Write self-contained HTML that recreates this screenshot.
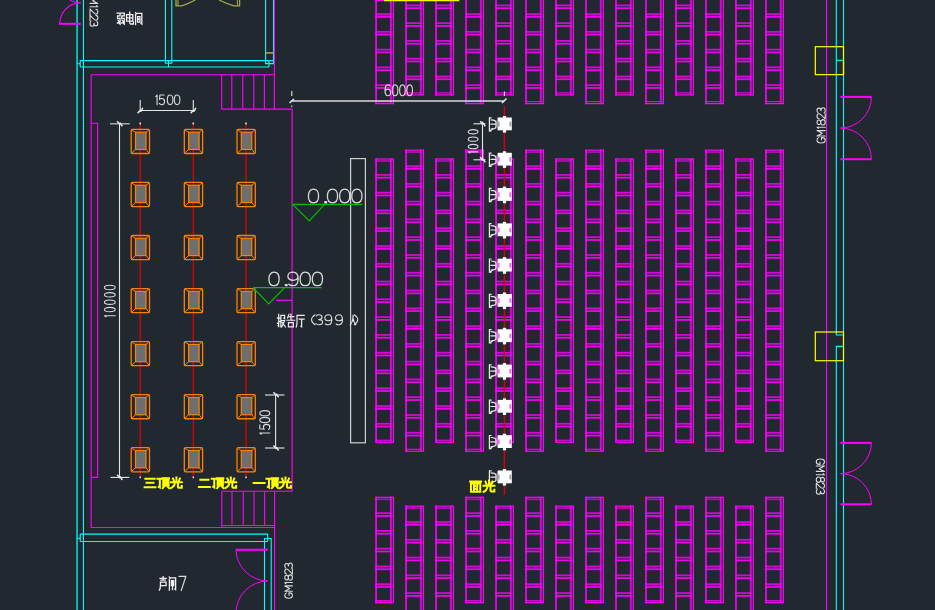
<!DOCTYPE html>
<html><head><meta charset="utf-8"><style>
html,body{margin:0;padding:0;background:#212830;width:935px;height:610px;overflow:hidden}
svg{display:block}
</style></head><body>
<svg width="935" height="610" viewBox="0 0 935 610">
<rect x="0" y="0" width="935" height="610" fill="#212830"/>
<line x1="77.05" y1="0.00" x2="77.05" y2="610.00" stroke="#00ffff" stroke-width="1.3" />
<line x1="83.45" y1="0.00" x2="83.45" y2="610.00" stroke="#00ffff" stroke-width="1.1" />
<path d="M80.2,60.6 H273.5 M80.2,67 H269 M80.2,60.6 V67 M77,63.8 H80.2" stroke="#00ffff" stroke-width="1.1" fill="none" />
<path d="M165.45,0 V63.3 H171.8 V0 M168.5,60.6 V67" stroke="#00ffff" stroke-width="1.1" fill="none" />
<path d="M265.6,0 V63.6 H273.5 V0 M269,60.5 V67.1" stroke="#00ffff" stroke-width="1.1" fill="none" />
<line x1="265.60" y1="52.90" x2="273.50" y2="52.90" stroke="#a3a84c" stroke-width="1.6" />
<path d="M176,0 L176,5.8 L181.8,5.8 Q189,3.5 195.3,0" stroke="#a3a84c" stroke-width="1.3" fill="none" />
<path d="M239.6,0 L239.6,5.8 L233.8,5.8 Q226,3.5 219,0" stroke="#a3a84c" stroke-width="1.3" fill="none" />
<line x1="237.40" y1="0.00" x2="237.40" y2="5.80" stroke="#a3a84c" stroke-width="1.0" />
<line x1="178.00" y1="0.00" x2="178.00" y2="5.80" stroke="#a3a84c" stroke-width="1.0" />
<line x1="59.00" y1="23.80" x2="80.70" y2="23.80" stroke="#ff00ff" stroke-width="2.0" />
<path d="M59.8,23.8 A21,21 0 0 1 80.7,2.8" stroke="#ff00ff" stroke-width="1.1" fill="none" />
<path d="M80.7,2.8 A21,21 0 0 1 69.9,0" stroke="#ff00ff" stroke-width="1.1" fill="none" />
<path d="M274.4,0 V109.1 H292.1 V491.2 H221.8" stroke="#ff00ff" stroke-width="1.1" fill="none" />
<path d="M91.1,74.8 H274.4" stroke="#ff00ff" stroke-width="1.1" fill="none" />
<path d="M91.1,74.8 V527.5 H274.6" stroke="#ff00ff" stroke-width="1.1" fill="none" />
<path d="M221.8,525.5 H274.6" stroke="#ff00ff" stroke-width="1.1" fill="none" />
<line x1="274.60" y1="491.20" x2="274.60" y2="610.00" stroke="#ff00ff" stroke-width="1.1" />
<path d="M221.7,74.8 V109.1 H274.4" stroke="#ff00ff" stroke-width="1.1" fill="none" />
<line x1="231.80" y1="74.80" x2="231.80" y2="109.10" stroke="#ff00ff" stroke-width="1.1" />
<line x1="242.80" y1="74.80" x2="242.80" y2="109.10" stroke="#ff00ff" stroke-width="1.1" />
<line x1="253.80" y1="74.80" x2="253.80" y2="109.10" stroke="#ff00ff" stroke-width="1.1" />
<line x1="264.40" y1="74.80" x2="264.40" y2="109.10" stroke="#ff00ff" stroke-width="1.1" />
<line x1="221.80" y1="491.20" x2="221.80" y2="527.50" stroke="#ff00ff" stroke-width="1.1" />
<line x1="232.00" y1="491.20" x2="232.00" y2="525.50" stroke="#ff00ff" stroke-width="1.1" />
<line x1="243.20" y1="491.20" x2="243.20" y2="525.50" stroke="#ff00ff" stroke-width="1.1" />
<line x1="254.00" y1="491.20" x2="254.00" y2="525.50" stroke="#ff00ff" stroke-width="1.1" />
<line x1="264.60" y1="491.20" x2="264.60" y2="525.50" stroke="#ff00ff" stroke-width="1.1" />
<path d="M91.1,123.2 H97.6 V477.4 H91.1" stroke="#ff00ff" stroke-width="1.1" fill="none" />
<line x1="276.00" y1="300.30" x2="292.00" y2="300.30" stroke="#ff00ff" stroke-width="1.2" />
<path d="M80.2,534.1 H267.7 V541.5 M80.2,541.5 H267.7 M80.2,534.1 V541.5 M77,538.3 H80.2" stroke="#00ffff" stroke-width="1.1" fill="none" />
<path d="M264.5,610 V538.5 H271.2 V610" stroke="#00ffff" stroke-width="1.1" fill="none" />
<line x1="235.80" y1="549.80" x2="268.00" y2="549.80" stroke="#ff00ff" stroke-width="2.0" />
<path d="M236,550 A32,32 0 0 0 268,581" stroke="#ff00ff" stroke-width="1.0" fill="none" />
<path d="M268,581 A32,32 0 0 0 236,613" stroke="#ff00ff" stroke-width="1.0" fill="none" />
<line x1="826.50" y1="0.00" x2="826.50" y2="610.00" stroke="#ff00ff" stroke-width="1.1" />
<path d="M836.3,0 L836.3,335 L843.5,335" stroke="#00ffff" stroke-width="1.1" fill="none" />
<path d="M843.5,346.4 L836.3,346.4 L836.3,610" stroke="#00ffff" stroke-width="1.1" fill="none" />
<line x1="843.50" y1="0.00" x2="843.50" y2="610.00" stroke="#00ffff" stroke-width="1.1" />
<line x1="836.30" y1="60.30" x2="843.50" y2="60.30" stroke="#00ffff" stroke-width="1.1" />
<rect x="815.30" y="46.70" width="28.20" height="27.90" stroke="#ffff00" stroke-width="1.2" fill="none" />
<rect x="815.30" y="332.00" width="28.20" height="28.70" stroke="#ffff00" stroke-width="1.2" fill="none" />
<line x1="843.50" y1="60.30" x2="843.50" y2="74.60" stroke="#ffff00" stroke-width="1.2" />
<line x1="840.40" y1="96.90" x2="871.40" y2="96.90" stroke="#ff00ff" stroke-width="2.0" />
<line x1="840.40" y1="159.20" x2="871.40" y2="159.20" stroke="#ff00ff" stroke-width="2.0" />
<path d="M871.4,96.9 A31,31 0 0 1 840.4,128.05" stroke="#ff00ff" stroke-width="1.0" fill="none" />
<path d="M840.4,128.05 A31,31 0 0 1 871.4,159.2" stroke="#ff00ff" stroke-width="1.0" fill="none" />
<line x1="840.40" y1="442.90" x2="871.40" y2="442.90" stroke="#ff00ff" stroke-width="2.0" />
<line x1="840.40" y1="504.30" x2="871.40" y2="504.30" stroke="#ff00ff" stroke-width="2.0" />
<path d="M871.4,442.9 A31,31 0 0 1 840.4,473.6" stroke="#ff00ff" stroke-width="1.0" fill="none" />
<path d="M840.4,473.6 A31,31 0 0 1 871.4,504.3" stroke="#ff00ff" stroke-width="1.0" fill="none" />
<line x1="140.20" y1="123.00" x2="140.20" y2="477.00" stroke="#dd0000" stroke-width="1.3" />
<line x1="140.20" y1="122.50" x2="140.20" y2="124.50" stroke="#e8e8e8" stroke-width="1.5" />
<line x1="140.20" y1="476.50" x2="140.20" y2="478.20" stroke="#e8e8e8" stroke-width="1.4" />
<line x1="193.30" y1="123.00" x2="193.30" y2="477.00" stroke="#dd0000" stroke-width="1.3" />
<line x1="193.30" y1="122.50" x2="193.30" y2="124.50" stroke="#e8e8e8" stroke-width="1.5" />
<line x1="193.30" y1="476.50" x2="193.30" y2="478.20" stroke="#e8e8e8" stroke-width="1.4" />
<line x1="246.00" y1="123.00" x2="246.00" y2="477.00" stroke="#dd0000" stroke-width="1.3" />
<line x1="246.00" y1="122.50" x2="246.00" y2="124.50" stroke="#e8e8e8" stroke-width="1.5" />
<line x1="246.00" y1="476.50" x2="246.00" y2="478.20" stroke="#e8e8e8" stroke-width="1.4" />
<rect x="131.20" y="129.40" width="18.30" height="24.10" stroke="#ff8000" stroke-width="1.3" fill="none" rx="1.2"/>
<rect x="135.50" y="132.20" width="10.50" height="17.30" stroke="#ff8000" stroke-width="1.2" fill="#6e6e6e" />
<path d="M131.8,130.0 L135.5,132.2 M148.89999999999998,130.0 L146.0,132.2 M131.8,152.89999999999998 L135.5,149.5 M148.89999999999998,152.89999999999998 L146.0,149.5" stroke="#ff8000" stroke-width="1.0" fill="none" />
<rect x="184.30" y="129.40" width="18.30" height="24.10" stroke="#ff8000" stroke-width="1.3" fill="none" rx="1.2"/>
<rect x="188.60" y="132.20" width="10.50" height="17.30" stroke="#ff8000" stroke-width="1.2" fill="#6e6e6e" />
<path d="M184.90000000000003,130.0 L188.60000000000002,132.2 M202.0,130.0 L199.10000000000002,132.2 M184.90000000000003,152.89999999999998 L188.60000000000002,149.5 M202.0,152.89999999999998 L199.10000000000002,149.5" stroke="#ff8000" stroke-width="1.0" fill="none" />
<rect x="237.00" y="129.40" width="18.30" height="24.10" stroke="#ff8000" stroke-width="1.3" fill="none" rx="1.2"/>
<rect x="241.30" y="132.20" width="10.50" height="17.30" stroke="#ff8000" stroke-width="1.2" fill="#6e6e6e" />
<path d="M237.60000000000002,130.0 L241.3,132.2 M254.7,130.0 L251.8,132.2 M237.60000000000002,152.89999999999998 L241.3,149.5 M254.7,152.89999999999998 L251.8,149.5" stroke="#ff8000" stroke-width="1.0" fill="none" />
<rect x="131.20" y="182.45" width="18.30" height="24.10" stroke="#ff8000" stroke-width="1.3" fill="none" rx="1.2"/>
<rect x="135.50" y="185.25" width="10.50" height="17.30" stroke="#ff8000" stroke-width="1.2" fill="#6e6e6e" />
<path d="M131.8,183.05 L135.5,185.25 M148.89999999999998,183.05 L146.0,185.25 M131.8,205.95 L135.5,202.55 M148.89999999999998,205.95 L146.0,202.55" stroke="#ff8000" stroke-width="1.0" fill="none" />
<rect x="184.30" y="182.45" width="18.30" height="24.10" stroke="#ff8000" stroke-width="1.3" fill="none" rx="1.2"/>
<rect x="188.60" y="185.25" width="10.50" height="17.30" stroke="#ff8000" stroke-width="1.2" fill="#6e6e6e" />
<path d="M184.90000000000003,183.05 L188.60000000000002,185.25 M202.0,183.05 L199.10000000000002,185.25 M184.90000000000003,205.95 L188.60000000000002,202.55 M202.0,205.95 L199.10000000000002,202.55" stroke="#ff8000" stroke-width="1.0" fill="none" />
<rect x="237.00" y="182.45" width="18.30" height="24.10" stroke="#ff8000" stroke-width="1.3" fill="none" rx="1.2"/>
<rect x="241.30" y="185.25" width="10.50" height="17.30" stroke="#ff8000" stroke-width="1.2" fill="#6e6e6e" />
<path d="M237.60000000000002,183.05 L241.3,185.25 M254.7,183.05 L251.8,185.25 M237.60000000000002,205.95 L241.3,202.55 M254.7,205.95 L251.8,202.55" stroke="#ff8000" stroke-width="1.0" fill="none" />
<rect x="131.20" y="235.50" width="18.30" height="24.10" stroke="#ff8000" stroke-width="1.3" fill="none" rx="1.2"/>
<rect x="135.50" y="238.30" width="10.50" height="17.30" stroke="#ff8000" stroke-width="1.2" fill="#6e6e6e" />
<path d="M131.8,236.1 L135.5,238.29999999999998 M148.89999999999998,236.1 L146.0,238.29999999999998 M131.8,259.0 L135.5,255.6 M148.89999999999998,259.0 L146.0,255.6" stroke="#ff8000" stroke-width="1.0" fill="none" />
<rect x="184.30" y="235.50" width="18.30" height="24.10" stroke="#ff8000" stroke-width="1.3" fill="none" rx="1.2"/>
<rect x="188.60" y="238.30" width="10.50" height="17.30" stroke="#ff8000" stroke-width="1.2" fill="#6e6e6e" />
<path d="M184.90000000000003,236.1 L188.60000000000002,238.29999999999998 M202.0,236.1 L199.10000000000002,238.29999999999998 M184.90000000000003,259.0 L188.60000000000002,255.6 M202.0,259.0 L199.10000000000002,255.6" stroke="#ff8000" stroke-width="1.0" fill="none" />
<rect x="237.00" y="235.50" width="18.30" height="24.10" stroke="#ff8000" stroke-width="1.3" fill="none" rx="1.2"/>
<rect x="241.30" y="238.30" width="10.50" height="17.30" stroke="#ff8000" stroke-width="1.2" fill="#6e6e6e" />
<path d="M237.60000000000002,236.1 L241.3,238.29999999999998 M254.7,236.1 L251.8,238.29999999999998 M237.60000000000002,259.0 L241.3,255.6 M254.7,259.0 L251.8,255.6" stroke="#ff8000" stroke-width="1.0" fill="none" />
<rect x="131.20" y="288.55" width="18.30" height="24.10" stroke="#ff8000" stroke-width="1.3" fill="none" rx="1.2"/>
<rect x="135.50" y="291.35" width="10.50" height="17.30" stroke="#ff8000" stroke-width="1.2" fill="#6e6e6e" />
<path d="M131.8,289.15 L135.5,291.34999999999997 M148.89999999999998,289.15 L146.0,291.34999999999997 M131.8,312.04999999999995 L135.5,308.65 M148.89999999999998,312.04999999999995 L146.0,308.65" stroke="#ff8000" stroke-width="1.0" fill="none" />
<rect x="184.30" y="288.55" width="18.30" height="24.10" stroke="#ff8000" stroke-width="1.3" fill="none" rx="1.2"/>
<rect x="188.60" y="291.35" width="10.50" height="17.30" stroke="#ff8000" stroke-width="1.2" fill="#6e6e6e" />
<path d="M184.90000000000003,289.15 L188.60000000000002,291.34999999999997 M202.0,289.15 L199.10000000000002,291.34999999999997 M184.90000000000003,312.04999999999995 L188.60000000000002,308.65 M202.0,312.04999999999995 L199.10000000000002,308.65" stroke="#ff8000" stroke-width="1.0" fill="none" />
<rect x="237.00" y="288.55" width="18.30" height="24.10" stroke="#ff8000" stroke-width="1.3" fill="none" rx="1.2"/>
<rect x="241.30" y="291.35" width="10.50" height="17.30" stroke="#ff8000" stroke-width="1.2" fill="#6e6e6e" />
<path d="M237.60000000000002,289.15 L241.3,291.34999999999997 M254.7,289.15 L251.8,291.34999999999997 M237.60000000000002,312.04999999999995 L241.3,308.65 M254.7,312.04999999999995 L251.8,308.65" stroke="#ff8000" stroke-width="1.0" fill="none" />
<rect x="131.20" y="341.60" width="18.30" height="24.10" stroke="#ff8000" stroke-width="1.3" fill="none" rx="1.2"/>
<rect x="135.50" y="344.40" width="10.50" height="17.30" stroke="#ff8000" stroke-width="1.2" fill="#6e6e6e" />
<path d="M131.8,342.2 L135.5,344.4 M148.89999999999998,342.2 L146.0,344.4 M131.8,365.09999999999997 L135.5,361.7 M148.89999999999998,365.09999999999997 L146.0,361.7" stroke="#ff8000" stroke-width="1.0" fill="none" />
<rect x="184.30" y="341.60" width="18.30" height="24.10" stroke="#ff8000" stroke-width="1.3" fill="none" rx="1.2"/>
<rect x="188.60" y="344.40" width="10.50" height="17.30" stroke="#ff8000" stroke-width="1.2" fill="#6e6e6e" />
<path d="M184.90000000000003,342.2 L188.60000000000002,344.4 M202.0,342.2 L199.10000000000002,344.4 M184.90000000000003,365.09999999999997 L188.60000000000002,361.7 M202.0,365.09999999999997 L199.10000000000002,361.7" stroke="#ff8000" stroke-width="1.0" fill="none" />
<rect x="237.00" y="341.60" width="18.30" height="24.10" stroke="#ff8000" stroke-width="1.3" fill="none" rx="1.2"/>
<rect x="241.30" y="344.40" width="10.50" height="17.30" stroke="#ff8000" stroke-width="1.2" fill="#6e6e6e" />
<path d="M237.60000000000002,342.2 L241.3,344.4 M254.7,342.2 L251.8,344.4 M237.60000000000002,365.09999999999997 L241.3,361.7 M254.7,365.09999999999997 L251.8,361.7" stroke="#ff8000" stroke-width="1.0" fill="none" />
<rect x="131.20" y="394.65" width="18.30" height="24.10" stroke="#ff8000" stroke-width="1.3" fill="none" rx="1.2"/>
<rect x="135.50" y="397.45" width="10.50" height="17.30" stroke="#ff8000" stroke-width="1.2" fill="#6e6e6e" />
<path d="M131.8,395.25 L135.5,397.45 M148.89999999999998,395.25 L146.0,397.45 M131.8,418.15 L135.5,414.75 M148.89999999999998,418.15 L146.0,414.75" stroke="#ff8000" stroke-width="1.0" fill="none" />
<rect x="184.30" y="394.65" width="18.30" height="24.10" stroke="#ff8000" stroke-width="1.3" fill="none" rx="1.2"/>
<rect x="188.60" y="397.45" width="10.50" height="17.30" stroke="#ff8000" stroke-width="1.2" fill="#6e6e6e" />
<path d="M184.90000000000003,395.25 L188.60000000000002,397.45 M202.0,395.25 L199.10000000000002,397.45 M184.90000000000003,418.15 L188.60000000000002,414.75 M202.0,418.15 L199.10000000000002,414.75" stroke="#ff8000" stroke-width="1.0" fill="none" />
<rect x="237.00" y="394.65" width="18.30" height="24.10" stroke="#ff8000" stroke-width="1.3" fill="none" rx="1.2"/>
<rect x="241.30" y="397.45" width="10.50" height="17.30" stroke="#ff8000" stroke-width="1.2" fill="#6e6e6e" />
<path d="M237.60000000000002,395.25 L241.3,397.45 M254.7,395.25 L251.8,397.45 M237.60000000000002,418.15 L241.3,414.75 M254.7,418.15 L251.8,414.75" stroke="#ff8000" stroke-width="1.0" fill="none" />
<rect x="131.20" y="447.70" width="18.30" height="24.10" stroke="#ff8000" stroke-width="1.3" fill="none" rx="1.2"/>
<rect x="135.50" y="450.50" width="10.50" height="17.30" stroke="#ff8000" stroke-width="1.2" fill="#6e6e6e" />
<path d="M131.8,448.29999999999995 L135.5,450.49999999999994 M148.89999999999998,448.29999999999995 L146.0,450.49999999999994 M131.8,471.19999999999993 L135.5,467.79999999999995 M148.89999999999998,471.19999999999993 L146.0,467.79999999999995" stroke="#ff8000" stroke-width="1.0" fill="none" />
<rect x="184.30" y="447.70" width="18.30" height="24.10" stroke="#ff8000" stroke-width="1.3" fill="none" rx="1.2"/>
<rect x="188.60" y="450.50" width="10.50" height="17.30" stroke="#ff8000" stroke-width="1.2" fill="#6e6e6e" />
<path d="M184.90000000000003,448.29999999999995 L188.60000000000002,450.49999999999994 M202.0,448.29999999999995 L199.10000000000002,450.49999999999994 M184.90000000000003,471.19999999999993 L188.60000000000002,467.79999999999995 M202.0,471.19999999999993 L199.10000000000002,467.79999999999995" stroke="#ff8000" stroke-width="1.0" fill="none" />
<rect x="237.00" y="447.70" width="18.30" height="24.10" stroke="#ff8000" stroke-width="1.3" fill="none" rx="1.2"/>
<rect x="241.30" y="450.50" width="10.50" height="17.30" stroke="#ff8000" stroke-width="1.2" fill="#6e6e6e" />
<path d="M237.60000000000002,448.29999999999995 L241.3,450.49999999999994 M254.7,448.29999999999995 L251.8,450.49999999999994 M237.60000000000002,471.19999999999993 L241.3,467.79999999999995 M254.7,471.19999999999993 L251.8,467.79999999999995" stroke="#ff8000" stroke-width="1.0" fill="none" />
<g stroke="#ff00ff" fill="none">
<line x1="376.10" y1="-20.12" x2="376.10" y2="104.20" stroke-width="1.6"/>
<line x1="390.90" y1="-20.12" x2="390.90" y2="104.20" stroke-width="2" stroke-opacity="0.8"/>
<line x1="393.50" y1="-20.12" x2="393.50" y2="104.20" stroke-width="1.2"/>
<line x1="375.10" y1="-3.66" x2="391.60" y2="-3.66" stroke-width="1.8" stroke-opacity="0.8"/>
<line x1="375.10" y1="-0.86" x2="391.60" y2="-0.86" stroke-width="1.8" stroke-opacity="0.9"/>
<line x1="375.10" y1="14.10" x2="391.60" y2="14.10" stroke-width="1.8" stroke-opacity="0.8"/>
<line x1="375.10" y1="16.90" x2="391.60" y2="16.90" stroke-width="1.8" stroke-opacity="0.9"/>
<line x1="375.10" y1="31.86" x2="391.60" y2="31.86" stroke-width="1.8" stroke-opacity="0.8"/>
<line x1="375.10" y1="34.66" x2="391.60" y2="34.66" stroke-width="1.8" stroke-opacity="0.9"/>
<line x1="375.10" y1="49.62" x2="391.60" y2="49.62" stroke-width="1.8" stroke-opacity="0.8"/>
<line x1="375.10" y1="52.42" x2="391.60" y2="52.42" stroke-width="1.8" stroke-opacity="0.9"/>
<line x1="375.10" y1="67.38" x2="391.60" y2="67.38" stroke-width="1.8" stroke-opacity="0.8"/>
<line x1="375.10" y1="70.18" x2="391.60" y2="70.18" stroke-width="1.8" stroke-opacity="0.9"/>
<line x1="375.10" y1="85.14" x2="391.60" y2="85.14" stroke-width="1.8" stroke-opacity="0.8"/>
<line x1="375.10" y1="87.94" x2="391.60" y2="87.94" stroke-width="1.8" stroke-opacity="0.9"/>
<line x1="375.10" y1="103.60" x2="393.60" y2="103.60" stroke-width="1.2"/>
<line x1="375.10" y1="101.60" x2="391.10" y2="101.60" stroke-width="1.2" stroke-opacity="0.85"/>
</g>
<g stroke="#ff00ff" fill="none">
<line x1="376.10" y1="158.40" x2="376.10" y2="442.88" stroke-width="1.6"/>
<line x1="390.90" y1="158.40" x2="390.90" y2="442.88" stroke-width="2" stroke-opacity="0.8"/>
<line x1="393.50" y1="158.40" x2="393.50" y2="442.88" stroke-width="1.2"/>
<line x1="375.10" y1="159.00" x2="393.60" y2="159.00" stroke-width="1.2"/>
<line x1="375.10" y1="161.00" x2="391.10" y2="161.00" stroke-width="1.8" stroke-opacity="0.6"/>
<line x1="375.10" y1="174.88" x2="391.60" y2="174.88" stroke-width="1.8" stroke-opacity="0.8"/>
<line x1="375.10" y1="177.68" x2="391.60" y2="177.68" stroke-width="1.8" stroke-opacity="0.9"/>
<line x1="375.10" y1="192.66" x2="391.60" y2="192.66" stroke-width="1.8" stroke-opacity="0.8"/>
<line x1="375.10" y1="195.46" x2="391.60" y2="195.46" stroke-width="1.8" stroke-opacity="0.9"/>
<line x1="375.10" y1="210.44" x2="391.60" y2="210.44" stroke-width="1.8" stroke-opacity="0.8"/>
<line x1="375.10" y1="213.24" x2="391.60" y2="213.24" stroke-width="1.8" stroke-opacity="0.9"/>
<line x1="375.10" y1="228.22" x2="391.60" y2="228.22" stroke-width="1.8" stroke-opacity="0.8"/>
<line x1="375.10" y1="231.02" x2="391.60" y2="231.02" stroke-width="1.8" stroke-opacity="0.9"/>
<line x1="375.10" y1="246.00" x2="391.60" y2="246.00" stroke-width="1.8" stroke-opacity="0.8"/>
<line x1="375.10" y1="248.80" x2="391.60" y2="248.80" stroke-width="1.8" stroke-opacity="0.9"/>
<line x1="375.10" y1="263.78" x2="391.60" y2="263.78" stroke-width="1.8" stroke-opacity="0.8"/>
<line x1="375.10" y1="266.58" x2="391.60" y2="266.58" stroke-width="1.8" stroke-opacity="0.9"/>
<line x1="375.10" y1="281.56" x2="391.60" y2="281.56" stroke-width="1.8" stroke-opacity="0.8"/>
<line x1="375.10" y1="284.36" x2="391.60" y2="284.36" stroke-width="1.8" stroke-opacity="0.9"/>
<line x1="375.10" y1="299.34" x2="391.60" y2="299.34" stroke-width="1.8" stroke-opacity="0.8"/>
<line x1="375.10" y1="302.14" x2="391.60" y2="302.14" stroke-width="1.8" stroke-opacity="0.9"/>
<line x1="375.10" y1="317.12" x2="391.60" y2="317.12" stroke-width="1.8" stroke-opacity="0.8"/>
<line x1="375.10" y1="319.92" x2="391.60" y2="319.92" stroke-width="1.8" stroke-opacity="0.9"/>
<line x1="375.10" y1="334.90" x2="391.60" y2="334.90" stroke-width="1.8" stroke-opacity="0.8"/>
<line x1="375.10" y1="337.70" x2="391.60" y2="337.70" stroke-width="1.8" stroke-opacity="0.9"/>
<line x1="375.10" y1="352.68" x2="391.60" y2="352.68" stroke-width="1.8" stroke-opacity="0.8"/>
<line x1="375.10" y1="355.48" x2="391.60" y2="355.48" stroke-width="1.8" stroke-opacity="0.9"/>
<line x1="375.10" y1="370.46" x2="391.60" y2="370.46" stroke-width="1.8" stroke-opacity="0.8"/>
<line x1="375.10" y1="373.26" x2="391.60" y2="373.26" stroke-width="1.8" stroke-opacity="0.9"/>
<line x1="375.10" y1="388.24" x2="391.60" y2="388.24" stroke-width="1.8" stroke-opacity="0.8"/>
<line x1="375.10" y1="391.04" x2="391.60" y2="391.04" stroke-width="1.8" stroke-opacity="0.9"/>
<line x1="375.10" y1="406.02" x2="391.60" y2="406.02" stroke-width="1.8" stroke-opacity="0.8"/>
<line x1="375.10" y1="408.82" x2="391.60" y2="408.82" stroke-width="1.8" stroke-opacity="0.9"/>
<line x1="375.10" y1="423.80" x2="391.60" y2="423.80" stroke-width="1.8" stroke-opacity="0.8"/>
<line x1="375.10" y1="426.60" x2="391.60" y2="426.60" stroke-width="1.8" stroke-opacity="0.9"/>
<line x1="375.10" y1="442.28" x2="393.60" y2="442.28" stroke-width="1.2"/>
<line x1="375.10" y1="440.28" x2="391.10" y2="440.28" stroke-width="1.2" stroke-opacity="0.85"/>
</g>
<g stroke="#ff00ff" fill="none">
<line x1="376.10" y1="496.70" x2="376.10" y2="603.26" stroke-width="1.6"/>
<line x1="390.90" y1="496.70" x2="390.90" y2="603.26" stroke-width="2" stroke-opacity="0.8"/>
<line x1="393.50" y1="496.70" x2="393.50" y2="603.26" stroke-width="1.2"/>
<line x1="375.10" y1="497.30" x2="393.60" y2="497.30" stroke-width="1.2"/>
<line x1="375.10" y1="499.30" x2="391.10" y2="499.30" stroke-width="1.8" stroke-opacity="0.6"/>
<line x1="375.10" y1="513.16" x2="391.60" y2="513.16" stroke-width="1.8" stroke-opacity="0.8"/>
<line x1="375.10" y1="515.96" x2="391.60" y2="515.96" stroke-width="1.8" stroke-opacity="0.9"/>
<line x1="375.10" y1="530.92" x2="391.60" y2="530.92" stroke-width="1.8" stroke-opacity="0.8"/>
<line x1="375.10" y1="533.72" x2="391.60" y2="533.72" stroke-width="1.8" stroke-opacity="0.9"/>
<line x1="375.10" y1="548.68" x2="391.60" y2="548.68" stroke-width="1.8" stroke-opacity="0.8"/>
<line x1="375.10" y1="551.48" x2="391.60" y2="551.48" stroke-width="1.8" stroke-opacity="0.9"/>
<line x1="375.10" y1="566.44" x2="391.60" y2="566.44" stroke-width="1.8" stroke-opacity="0.8"/>
<line x1="375.10" y1="569.24" x2="391.60" y2="569.24" stroke-width="1.8" stroke-opacity="0.9"/>
<line x1="375.10" y1="584.20" x2="391.60" y2="584.20" stroke-width="1.8" stroke-opacity="0.8"/>
<line x1="375.10" y1="587.00" x2="391.60" y2="587.00" stroke-width="1.8" stroke-opacity="0.9"/>
<line x1="375.10" y1="602.66" x2="393.60" y2="602.66" stroke-width="1.2"/>
<line x1="375.10" y1="600.66" x2="391.10" y2="600.66" stroke-width="1.2" stroke-opacity="0.85"/>
</g>
<g stroke="#ff00ff" fill="none">
<line x1="406.09" y1="-28.82" x2="406.09" y2="95.50" stroke-width="1.6"/>
<line x1="420.89" y1="-28.82" x2="420.89" y2="95.50" stroke-width="2" stroke-opacity="0.8"/>
<line x1="423.49" y1="-28.82" x2="423.49" y2="95.50" stroke-width="1.2"/>
<line x1="405.09" y1="5.40" x2="421.59" y2="5.40" stroke-width="1.8" stroke-opacity="0.8"/>
<line x1="405.09" y1="8.20" x2="421.59" y2="8.20" stroke-width="1.8" stroke-opacity="0.9"/>
<line x1="405.09" y1="23.16" x2="421.59" y2="23.16" stroke-width="1.8" stroke-opacity="0.8"/>
<line x1="405.09" y1="25.96" x2="421.59" y2="25.96" stroke-width="1.8" stroke-opacity="0.9"/>
<line x1="405.09" y1="40.92" x2="421.59" y2="40.92" stroke-width="1.8" stroke-opacity="0.8"/>
<line x1="405.09" y1="43.72" x2="421.59" y2="43.72" stroke-width="1.8" stroke-opacity="0.9"/>
<line x1="405.09" y1="58.68" x2="421.59" y2="58.68" stroke-width="1.8" stroke-opacity="0.8"/>
<line x1="405.09" y1="61.48" x2="421.59" y2="61.48" stroke-width="1.8" stroke-opacity="0.9"/>
<line x1="405.09" y1="76.44" x2="421.59" y2="76.44" stroke-width="1.8" stroke-opacity="0.8"/>
<line x1="405.09" y1="79.24" x2="421.59" y2="79.24" stroke-width="1.8" stroke-opacity="0.9"/>
<line x1="405.09" y1="94.90" x2="423.59" y2="94.90" stroke-width="1.2"/>
<line x1="405.09" y1="92.90" x2="421.09" y2="92.90" stroke-width="1.2" stroke-opacity="0.85"/>
</g>
<g stroke="#ff00ff" fill="none">
<line x1="406.09" y1="149.60" x2="406.09" y2="451.86" stroke-width="1.6"/>
<line x1="420.89" y1="149.60" x2="420.89" y2="451.86" stroke-width="2" stroke-opacity="0.8"/>
<line x1="423.49" y1="149.60" x2="423.49" y2="451.86" stroke-width="1.2"/>
<line x1="405.09" y1="150.20" x2="423.59" y2="150.20" stroke-width="1.2"/>
<line x1="405.09" y1="152.20" x2="421.09" y2="152.20" stroke-width="1.8" stroke-opacity="0.6"/>
<line x1="405.09" y1="166.08" x2="421.59" y2="166.08" stroke-width="1.8" stroke-opacity="0.8"/>
<line x1="405.09" y1="168.88" x2="421.59" y2="168.88" stroke-width="1.8" stroke-opacity="0.9"/>
<line x1="405.09" y1="183.86" x2="421.59" y2="183.86" stroke-width="1.8" stroke-opacity="0.8"/>
<line x1="405.09" y1="186.66" x2="421.59" y2="186.66" stroke-width="1.8" stroke-opacity="0.9"/>
<line x1="405.09" y1="201.64" x2="421.59" y2="201.64" stroke-width="1.8" stroke-opacity="0.8"/>
<line x1="405.09" y1="204.44" x2="421.59" y2="204.44" stroke-width="1.8" stroke-opacity="0.9"/>
<line x1="405.09" y1="219.42" x2="421.59" y2="219.42" stroke-width="1.8" stroke-opacity="0.8"/>
<line x1="405.09" y1="222.22" x2="421.59" y2="222.22" stroke-width="1.8" stroke-opacity="0.9"/>
<line x1="405.09" y1="237.20" x2="421.59" y2="237.20" stroke-width="1.8" stroke-opacity="0.8"/>
<line x1="405.09" y1="240.00" x2="421.59" y2="240.00" stroke-width="1.8" stroke-opacity="0.9"/>
<line x1="405.09" y1="254.98" x2="421.59" y2="254.98" stroke-width="1.8" stroke-opacity="0.8"/>
<line x1="405.09" y1="257.78" x2="421.59" y2="257.78" stroke-width="1.8" stroke-opacity="0.9"/>
<line x1="405.09" y1="272.76" x2="421.59" y2="272.76" stroke-width="1.8" stroke-opacity="0.8"/>
<line x1="405.09" y1="275.56" x2="421.59" y2="275.56" stroke-width="1.8" stroke-opacity="0.9"/>
<line x1="405.09" y1="290.54" x2="421.59" y2="290.54" stroke-width="1.8" stroke-opacity="0.8"/>
<line x1="405.09" y1="293.34" x2="421.59" y2="293.34" stroke-width="1.8" stroke-opacity="0.9"/>
<line x1="405.09" y1="308.32" x2="421.59" y2="308.32" stroke-width="1.8" stroke-opacity="0.8"/>
<line x1="405.09" y1="311.12" x2="421.59" y2="311.12" stroke-width="1.8" stroke-opacity="0.9"/>
<line x1="405.09" y1="326.10" x2="421.59" y2="326.10" stroke-width="1.8" stroke-opacity="0.8"/>
<line x1="405.09" y1="328.90" x2="421.59" y2="328.90" stroke-width="1.8" stroke-opacity="0.9"/>
<line x1="405.09" y1="343.88" x2="421.59" y2="343.88" stroke-width="1.8" stroke-opacity="0.8"/>
<line x1="405.09" y1="346.68" x2="421.59" y2="346.68" stroke-width="1.8" stroke-opacity="0.9"/>
<line x1="405.09" y1="361.66" x2="421.59" y2="361.66" stroke-width="1.8" stroke-opacity="0.8"/>
<line x1="405.09" y1="364.46" x2="421.59" y2="364.46" stroke-width="1.8" stroke-opacity="0.9"/>
<line x1="405.09" y1="379.44" x2="421.59" y2="379.44" stroke-width="1.8" stroke-opacity="0.8"/>
<line x1="405.09" y1="382.24" x2="421.59" y2="382.24" stroke-width="1.8" stroke-opacity="0.9"/>
<line x1="405.09" y1="397.22" x2="421.59" y2="397.22" stroke-width="1.8" stroke-opacity="0.8"/>
<line x1="405.09" y1="400.02" x2="421.59" y2="400.02" stroke-width="1.8" stroke-opacity="0.9"/>
<line x1="405.09" y1="415.00" x2="421.59" y2="415.00" stroke-width="1.8" stroke-opacity="0.8"/>
<line x1="405.09" y1="417.80" x2="421.59" y2="417.80" stroke-width="1.8" stroke-opacity="0.9"/>
<line x1="405.09" y1="432.78" x2="421.59" y2="432.78" stroke-width="1.8" stroke-opacity="0.8"/>
<line x1="405.09" y1="435.58" x2="421.59" y2="435.58" stroke-width="1.8" stroke-opacity="0.9"/>
<line x1="405.09" y1="451.26" x2="423.59" y2="451.26" stroke-width="1.2"/>
<line x1="405.09" y1="449.26" x2="421.09" y2="449.26" stroke-width="1.2" stroke-opacity="0.85"/>
</g>
<g stroke="#ff00ff" fill="none">
<line x1="406.09" y1="505.60" x2="406.09" y2="612.16" stroke-width="1.6"/>
<line x1="420.89" y1="505.60" x2="420.89" y2="612.16" stroke-width="2" stroke-opacity="0.8"/>
<line x1="423.49" y1="505.60" x2="423.49" y2="612.16" stroke-width="1.2"/>
<line x1="405.09" y1="506.20" x2="423.59" y2="506.20" stroke-width="1.2"/>
<line x1="405.09" y1="508.20" x2="421.09" y2="508.20" stroke-width="1.8" stroke-opacity="0.6"/>
<line x1="405.09" y1="522.06" x2="421.59" y2="522.06" stroke-width="1.8" stroke-opacity="0.8"/>
<line x1="405.09" y1="524.86" x2="421.59" y2="524.86" stroke-width="1.8" stroke-opacity="0.9"/>
<line x1="405.09" y1="539.82" x2="421.59" y2="539.82" stroke-width="1.8" stroke-opacity="0.8"/>
<line x1="405.09" y1="542.62" x2="421.59" y2="542.62" stroke-width="1.8" stroke-opacity="0.9"/>
<line x1="405.09" y1="557.58" x2="421.59" y2="557.58" stroke-width="1.8" stroke-opacity="0.8"/>
<line x1="405.09" y1="560.38" x2="421.59" y2="560.38" stroke-width="1.8" stroke-opacity="0.9"/>
<line x1="405.09" y1="575.34" x2="421.59" y2="575.34" stroke-width="1.8" stroke-opacity="0.8"/>
<line x1="405.09" y1="578.14" x2="421.59" y2="578.14" stroke-width="1.8" stroke-opacity="0.9"/>
<line x1="405.09" y1="593.10" x2="421.59" y2="593.10" stroke-width="1.8" stroke-opacity="0.8"/>
<line x1="405.09" y1="595.90" x2="421.59" y2="595.90" stroke-width="1.8" stroke-opacity="0.9"/>
</g>
<g stroke="#ff00ff" fill="none">
<line x1="436.08" y1="-28.82" x2="436.08" y2="95.50" stroke-width="1.6"/>
<line x1="450.88" y1="-28.82" x2="450.88" y2="95.50" stroke-width="2" stroke-opacity="0.8"/>
<line x1="453.48" y1="-28.82" x2="453.48" y2="95.50" stroke-width="1.2"/>
<line x1="435.08" y1="5.40" x2="451.58" y2="5.40" stroke-width="1.8" stroke-opacity="0.8"/>
<line x1="435.08" y1="8.20" x2="451.58" y2="8.20" stroke-width="1.8" stroke-opacity="0.9"/>
<line x1="435.08" y1="23.16" x2="451.58" y2="23.16" stroke-width="1.8" stroke-opacity="0.8"/>
<line x1="435.08" y1="25.96" x2="451.58" y2="25.96" stroke-width="1.8" stroke-opacity="0.9"/>
<line x1="435.08" y1="40.92" x2="451.58" y2="40.92" stroke-width="1.8" stroke-opacity="0.8"/>
<line x1="435.08" y1="43.72" x2="451.58" y2="43.72" stroke-width="1.8" stroke-opacity="0.9"/>
<line x1="435.08" y1="58.68" x2="451.58" y2="58.68" stroke-width="1.8" stroke-opacity="0.8"/>
<line x1="435.08" y1="61.48" x2="451.58" y2="61.48" stroke-width="1.8" stroke-opacity="0.9"/>
<line x1="435.08" y1="76.44" x2="451.58" y2="76.44" stroke-width="1.8" stroke-opacity="0.8"/>
<line x1="435.08" y1="79.24" x2="451.58" y2="79.24" stroke-width="1.8" stroke-opacity="0.9"/>
<line x1="435.08" y1="94.90" x2="453.58" y2="94.90" stroke-width="1.2"/>
<line x1="435.08" y1="92.90" x2="451.08" y2="92.90" stroke-width="1.2" stroke-opacity="0.85"/>
</g>
<g stroke="#ff00ff" fill="none">
<line x1="436.08" y1="158.40" x2="436.08" y2="442.88" stroke-width="1.6"/>
<line x1="450.88" y1="158.40" x2="450.88" y2="442.88" stroke-width="2" stroke-opacity="0.8"/>
<line x1="453.48" y1="158.40" x2="453.48" y2="442.88" stroke-width="1.2"/>
<line x1="435.08" y1="159.00" x2="453.58" y2="159.00" stroke-width="1.2"/>
<line x1="435.08" y1="161.00" x2="451.08" y2="161.00" stroke-width="1.8" stroke-opacity="0.6"/>
<line x1="435.08" y1="174.88" x2="451.58" y2="174.88" stroke-width="1.8" stroke-opacity="0.8"/>
<line x1="435.08" y1="177.68" x2="451.58" y2="177.68" stroke-width="1.8" stroke-opacity="0.9"/>
<line x1="435.08" y1="192.66" x2="451.58" y2="192.66" stroke-width="1.8" stroke-opacity="0.8"/>
<line x1="435.08" y1="195.46" x2="451.58" y2="195.46" stroke-width="1.8" stroke-opacity="0.9"/>
<line x1="435.08" y1="210.44" x2="451.58" y2="210.44" stroke-width="1.8" stroke-opacity="0.8"/>
<line x1="435.08" y1="213.24" x2="451.58" y2="213.24" stroke-width="1.8" stroke-opacity="0.9"/>
<line x1="435.08" y1="228.22" x2="451.58" y2="228.22" stroke-width="1.8" stroke-opacity="0.8"/>
<line x1="435.08" y1="231.02" x2="451.58" y2="231.02" stroke-width="1.8" stroke-opacity="0.9"/>
<line x1="435.08" y1="246.00" x2="451.58" y2="246.00" stroke-width="1.8" stroke-opacity="0.8"/>
<line x1="435.08" y1="248.80" x2="451.58" y2="248.80" stroke-width="1.8" stroke-opacity="0.9"/>
<line x1="435.08" y1="263.78" x2="451.58" y2="263.78" stroke-width="1.8" stroke-opacity="0.8"/>
<line x1="435.08" y1="266.58" x2="451.58" y2="266.58" stroke-width="1.8" stroke-opacity="0.9"/>
<line x1="435.08" y1="281.56" x2="451.58" y2="281.56" stroke-width="1.8" stroke-opacity="0.8"/>
<line x1="435.08" y1="284.36" x2="451.58" y2="284.36" stroke-width="1.8" stroke-opacity="0.9"/>
<line x1="435.08" y1="299.34" x2="451.58" y2="299.34" stroke-width="1.8" stroke-opacity="0.8"/>
<line x1="435.08" y1="302.14" x2="451.58" y2="302.14" stroke-width="1.8" stroke-opacity="0.9"/>
<line x1="435.08" y1="317.12" x2="451.58" y2="317.12" stroke-width="1.8" stroke-opacity="0.8"/>
<line x1="435.08" y1="319.92" x2="451.58" y2="319.92" stroke-width="1.8" stroke-opacity="0.9"/>
<line x1="435.08" y1="334.90" x2="451.58" y2="334.90" stroke-width="1.8" stroke-opacity="0.8"/>
<line x1="435.08" y1="337.70" x2="451.58" y2="337.70" stroke-width="1.8" stroke-opacity="0.9"/>
<line x1="435.08" y1="352.68" x2="451.58" y2="352.68" stroke-width="1.8" stroke-opacity="0.8"/>
<line x1="435.08" y1="355.48" x2="451.58" y2="355.48" stroke-width="1.8" stroke-opacity="0.9"/>
<line x1="435.08" y1="370.46" x2="451.58" y2="370.46" stroke-width="1.8" stroke-opacity="0.8"/>
<line x1="435.08" y1="373.26" x2="451.58" y2="373.26" stroke-width="1.8" stroke-opacity="0.9"/>
<line x1="435.08" y1="388.24" x2="451.58" y2="388.24" stroke-width="1.8" stroke-opacity="0.8"/>
<line x1="435.08" y1="391.04" x2="451.58" y2="391.04" stroke-width="1.8" stroke-opacity="0.9"/>
<line x1="435.08" y1="406.02" x2="451.58" y2="406.02" stroke-width="1.8" stroke-opacity="0.8"/>
<line x1="435.08" y1="408.82" x2="451.58" y2="408.82" stroke-width="1.8" stroke-opacity="0.9"/>
<line x1="435.08" y1="423.80" x2="451.58" y2="423.80" stroke-width="1.8" stroke-opacity="0.8"/>
<line x1="435.08" y1="426.60" x2="451.58" y2="426.60" stroke-width="1.8" stroke-opacity="0.9"/>
<line x1="435.08" y1="442.28" x2="453.58" y2="442.28" stroke-width="1.2"/>
<line x1="435.08" y1="440.28" x2="451.08" y2="440.28" stroke-width="1.2" stroke-opacity="0.85"/>
</g>
<g stroke="#ff00ff" fill="none">
<line x1="436.08" y1="505.60" x2="436.08" y2="612.16" stroke-width="1.6"/>
<line x1="450.88" y1="505.60" x2="450.88" y2="612.16" stroke-width="2" stroke-opacity="0.8"/>
<line x1="453.48" y1="505.60" x2="453.48" y2="612.16" stroke-width="1.2"/>
<line x1="435.08" y1="506.20" x2="453.58" y2="506.20" stroke-width="1.2"/>
<line x1="435.08" y1="508.20" x2="451.08" y2="508.20" stroke-width="1.8" stroke-opacity="0.6"/>
<line x1="435.08" y1="522.06" x2="451.58" y2="522.06" stroke-width="1.8" stroke-opacity="0.8"/>
<line x1="435.08" y1="524.86" x2="451.58" y2="524.86" stroke-width="1.8" stroke-opacity="0.9"/>
<line x1="435.08" y1="539.82" x2="451.58" y2="539.82" stroke-width="1.8" stroke-opacity="0.8"/>
<line x1="435.08" y1="542.62" x2="451.58" y2="542.62" stroke-width="1.8" stroke-opacity="0.9"/>
<line x1="435.08" y1="557.58" x2="451.58" y2="557.58" stroke-width="1.8" stroke-opacity="0.8"/>
<line x1="435.08" y1="560.38" x2="451.58" y2="560.38" stroke-width="1.8" stroke-opacity="0.9"/>
<line x1="435.08" y1="575.34" x2="451.58" y2="575.34" stroke-width="1.8" stroke-opacity="0.8"/>
<line x1="435.08" y1="578.14" x2="451.58" y2="578.14" stroke-width="1.8" stroke-opacity="0.9"/>
<line x1="435.08" y1="593.10" x2="451.58" y2="593.10" stroke-width="1.8" stroke-opacity="0.8"/>
<line x1="435.08" y1="595.90" x2="451.58" y2="595.90" stroke-width="1.8" stroke-opacity="0.9"/>
</g>
<g stroke="#ff00ff" fill="none">
<line x1="466.07" y1="-20.12" x2="466.07" y2="104.20" stroke-width="1.6"/>
<line x1="480.87" y1="-20.12" x2="480.87" y2="104.20" stroke-width="2" stroke-opacity="0.8"/>
<line x1="483.47" y1="-20.12" x2="483.47" y2="104.20" stroke-width="1.2"/>
<line x1="465.07" y1="-3.66" x2="481.57" y2="-3.66" stroke-width="1.8" stroke-opacity="0.8"/>
<line x1="465.07" y1="-0.86" x2="481.57" y2="-0.86" stroke-width="1.8" stroke-opacity="0.9"/>
<line x1="465.07" y1="14.10" x2="481.57" y2="14.10" stroke-width="1.8" stroke-opacity="0.8"/>
<line x1="465.07" y1="16.90" x2="481.57" y2="16.90" stroke-width="1.8" stroke-opacity="0.9"/>
<line x1="465.07" y1="31.86" x2="481.57" y2="31.86" stroke-width="1.8" stroke-opacity="0.8"/>
<line x1="465.07" y1="34.66" x2="481.57" y2="34.66" stroke-width="1.8" stroke-opacity="0.9"/>
<line x1="465.07" y1="49.62" x2="481.57" y2="49.62" stroke-width="1.8" stroke-opacity="0.8"/>
<line x1="465.07" y1="52.42" x2="481.57" y2="52.42" stroke-width="1.8" stroke-opacity="0.9"/>
<line x1="465.07" y1="67.38" x2="481.57" y2="67.38" stroke-width="1.8" stroke-opacity="0.8"/>
<line x1="465.07" y1="70.18" x2="481.57" y2="70.18" stroke-width="1.8" stroke-opacity="0.9"/>
<line x1="465.07" y1="85.14" x2="481.57" y2="85.14" stroke-width="1.8" stroke-opacity="0.8"/>
<line x1="465.07" y1="87.94" x2="481.57" y2="87.94" stroke-width="1.8" stroke-opacity="0.9"/>
<line x1="465.07" y1="103.60" x2="483.57" y2="103.60" stroke-width="1.2"/>
<line x1="465.07" y1="101.60" x2="481.07" y2="101.60" stroke-width="1.2" stroke-opacity="0.85"/>
</g>
<g stroke="#ff00ff" fill="none">
<line x1="466.07" y1="149.60" x2="466.07" y2="451.86" stroke-width="1.6"/>
<line x1="480.87" y1="149.60" x2="480.87" y2="451.86" stroke-width="2" stroke-opacity="0.8"/>
<line x1="483.47" y1="149.60" x2="483.47" y2="451.86" stroke-width="1.2"/>
<line x1="465.07" y1="150.20" x2="483.57" y2="150.20" stroke-width="1.2"/>
<line x1="465.07" y1="152.20" x2="481.07" y2="152.20" stroke-width="1.8" stroke-opacity="0.6"/>
<line x1="465.07" y1="166.08" x2="481.57" y2="166.08" stroke-width="1.8" stroke-opacity="0.8"/>
<line x1="465.07" y1="168.88" x2="481.57" y2="168.88" stroke-width="1.8" stroke-opacity="0.9"/>
<line x1="465.07" y1="183.86" x2="481.57" y2="183.86" stroke-width="1.8" stroke-opacity="0.8"/>
<line x1="465.07" y1="186.66" x2="481.57" y2="186.66" stroke-width="1.8" stroke-opacity="0.9"/>
<line x1="465.07" y1="201.64" x2="481.57" y2="201.64" stroke-width="1.8" stroke-opacity="0.8"/>
<line x1="465.07" y1="204.44" x2="481.57" y2="204.44" stroke-width="1.8" stroke-opacity="0.9"/>
<line x1="465.07" y1="219.42" x2="481.57" y2="219.42" stroke-width="1.8" stroke-opacity="0.8"/>
<line x1="465.07" y1="222.22" x2="481.57" y2="222.22" stroke-width="1.8" stroke-opacity="0.9"/>
<line x1="465.07" y1="237.20" x2="481.57" y2="237.20" stroke-width="1.8" stroke-opacity="0.8"/>
<line x1="465.07" y1="240.00" x2="481.57" y2="240.00" stroke-width="1.8" stroke-opacity="0.9"/>
<line x1="465.07" y1="254.98" x2="481.57" y2="254.98" stroke-width="1.8" stroke-opacity="0.8"/>
<line x1="465.07" y1="257.78" x2="481.57" y2="257.78" stroke-width="1.8" stroke-opacity="0.9"/>
<line x1="465.07" y1="272.76" x2="481.57" y2="272.76" stroke-width="1.8" stroke-opacity="0.8"/>
<line x1="465.07" y1="275.56" x2="481.57" y2="275.56" stroke-width="1.8" stroke-opacity="0.9"/>
<line x1="465.07" y1="290.54" x2="481.57" y2="290.54" stroke-width="1.8" stroke-opacity="0.8"/>
<line x1="465.07" y1="293.34" x2="481.57" y2="293.34" stroke-width="1.8" stroke-opacity="0.9"/>
<line x1="465.07" y1="308.32" x2="481.57" y2="308.32" stroke-width="1.8" stroke-opacity="0.8"/>
<line x1="465.07" y1="311.12" x2="481.57" y2="311.12" stroke-width="1.8" stroke-opacity="0.9"/>
<line x1="465.07" y1="326.10" x2="481.57" y2="326.10" stroke-width="1.8" stroke-opacity="0.8"/>
<line x1="465.07" y1="328.90" x2="481.57" y2="328.90" stroke-width="1.8" stroke-opacity="0.9"/>
<line x1="465.07" y1="343.88" x2="481.57" y2="343.88" stroke-width="1.8" stroke-opacity="0.8"/>
<line x1="465.07" y1="346.68" x2="481.57" y2="346.68" stroke-width="1.8" stroke-opacity="0.9"/>
<line x1="465.07" y1="361.66" x2="481.57" y2="361.66" stroke-width="1.8" stroke-opacity="0.8"/>
<line x1="465.07" y1="364.46" x2="481.57" y2="364.46" stroke-width="1.8" stroke-opacity="0.9"/>
<line x1="465.07" y1="379.44" x2="481.57" y2="379.44" stroke-width="1.8" stroke-opacity="0.8"/>
<line x1="465.07" y1="382.24" x2="481.57" y2="382.24" stroke-width="1.8" stroke-opacity="0.9"/>
<line x1="465.07" y1="397.22" x2="481.57" y2="397.22" stroke-width="1.8" stroke-opacity="0.8"/>
<line x1="465.07" y1="400.02" x2="481.57" y2="400.02" stroke-width="1.8" stroke-opacity="0.9"/>
<line x1="465.07" y1="415.00" x2="481.57" y2="415.00" stroke-width="1.8" stroke-opacity="0.8"/>
<line x1="465.07" y1="417.80" x2="481.57" y2="417.80" stroke-width="1.8" stroke-opacity="0.9"/>
<line x1="465.07" y1="432.78" x2="481.57" y2="432.78" stroke-width="1.8" stroke-opacity="0.8"/>
<line x1="465.07" y1="435.58" x2="481.57" y2="435.58" stroke-width="1.8" stroke-opacity="0.9"/>
<line x1="465.07" y1="451.26" x2="483.57" y2="451.26" stroke-width="1.2"/>
<line x1="465.07" y1="449.26" x2="481.07" y2="449.26" stroke-width="1.2" stroke-opacity="0.85"/>
</g>
<g stroke="#ff00ff" fill="none">
<line x1="466.07" y1="496.70" x2="466.07" y2="603.26" stroke-width="1.6"/>
<line x1="480.87" y1="496.70" x2="480.87" y2="603.26" stroke-width="2" stroke-opacity="0.8"/>
<line x1="483.47" y1="496.70" x2="483.47" y2="603.26" stroke-width="1.2"/>
<line x1="465.07" y1="497.30" x2="483.57" y2="497.30" stroke-width="1.2"/>
<line x1="465.07" y1="499.30" x2="481.07" y2="499.30" stroke-width="1.8" stroke-opacity="0.6"/>
<line x1="465.07" y1="513.16" x2="481.57" y2="513.16" stroke-width="1.8" stroke-opacity="0.8"/>
<line x1="465.07" y1="515.96" x2="481.57" y2="515.96" stroke-width="1.8" stroke-opacity="0.9"/>
<line x1="465.07" y1="530.92" x2="481.57" y2="530.92" stroke-width="1.8" stroke-opacity="0.8"/>
<line x1="465.07" y1="533.72" x2="481.57" y2="533.72" stroke-width="1.8" stroke-opacity="0.9"/>
<line x1="465.07" y1="548.68" x2="481.57" y2="548.68" stroke-width="1.8" stroke-opacity="0.8"/>
<line x1="465.07" y1="551.48" x2="481.57" y2="551.48" stroke-width="1.8" stroke-opacity="0.9"/>
<line x1="465.07" y1="566.44" x2="481.57" y2="566.44" stroke-width="1.8" stroke-opacity="0.8"/>
<line x1="465.07" y1="569.24" x2="481.57" y2="569.24" stroke-width="1.8" stroke-opacity="0.9"/>
<line x1="465.07" y1="584.20" x2="481.57" y2="584.20" stroke-width="1.8" stroke-opacity="0.8"/>
<line x1="465.07" y1="587.00" x2="481.57" y2="587.00" stroke-width="1.8" stroke-opacity="0.9"/>
<line x1="465.07" y1="602.66" x2="483.57" y2="602.66" stroke-width="1.2"/>
<line x1="465.07" y1="600.66" x2="481.07" y2="600.66" stroke-width="1.2" stroke-opacity="0.85"/>
</g>
<g stroke="#ff00ff" fill="none">
<line x1="496.06" y1="-28.82" x2="496.06" y2="95.50" stroke-width="1.6"/>
<line x1="510.86" y1="-28.82" x2="510.86" y2="95.50" stroke-width="2" stroke-opacity="0.8"/>
<line x1="513.46" y1="-28.82" x2="513.46" y2="95.50" stroke-width="1.2"/>
<line x1="495.06" y1="5.40" x2="511.56" y2="5.40" stroke-width="1.8" stroke-opacity="0.8"/>
<line x1="495.06" y1="8.20" x2="511.56" y2="8.20" stroke-width="1.8" stroke-opacity="0.9"/>
<line x1="495.06" y1="23.16" x2="511.56" y2="23.16" stroke-width="1.8" stroke-opacity="0.8"/>
<line x1="495.06" y1="25.96" x2="511.56" y2="25.96" stroke-width="1.8" stroke-opacity="0.9"/>
<line x1="495.06" y1="40.92" x2="511.56" y2="40.92" stroke-width="1.8" stroke-opacity="0.8"/>
<line x1="495.06" y1="43.72" x2="511.56" y2="43.72" stroke-width="1.8" stroke-opacity="0.9"/>
<line x1="495.06" y1="58.68" x2="511.56" y2="58.68" stroke-width="1.8" stroke-opacity="0.8"/>
<line x1="495.06" y1="61.48" x2="511.56" y2="61.48" stroke-width="1.8" stroke-opacity="0.9"/>
<line x1="495.06" y1="76.44" x2="511.56" y2="76.44" stroke-width="1.8" stroke-opacity="0.8"/>
<line x1="495.06" y1="79.24" x2="511.56" y2="79.24" stroke-width="1.8" stroke-opacity="0.9"/>
<line x1="495.06" y1="94.90" x2="513.56" y2="94.90" stroke-width="1.2"/>
<line x1="495.06" y1="92.90" x2="511.06" y2="92.90" stroke-width="1.2" stroke-opacity="0.85"/>
</g>
<g stroke="#ff00ff" fill="none">
<line x1="496.06" y1="158.40" x2="496.06" y2="442.88" stroke-width="1.6"/>
<line x1="510.86" y1="158.40" x2="510.86" y2="442.88" stroke-width="2" stroke-opacity="0.8"/>
<line x1="513.46" y1="158.40" x2="513.46" y2="442.88" stroke-width="1.2"/>
<line x1="495.06" y1="159.00" x2="513.56" y2="159.00" stroke-width="1.2"/>
<line x1="495.06" y1="161.00" x2="511.06" y2="161.00" stroke-width="1.8" stroke-opacity="0.6"/>
<line x1="495.06" y1="174.88" x2="511.56" y2="174.88" stroke-width="1.8" stroke-opacity="0.8"/>
<line x1="495.06" y1="177.68" x2="511.56" y2="177.68" stroke-width="1.8" stroke-opacity="0.9"/>
<line x1="495.06" y1="192.66" x2="511.56" y2="192.66" stroke-width="1.8" stroke-opacity="0.8"/>
<line x1="495.06" y1="195.46" x2="511.56" y2="195.46" stroke-width="1.8" stroke-opacity="0.9"/>
<line x1="495.06" y1="210.44" x2="511.56" y2="210.44" stroke-width="1.8" stroke-opacity="0.8"/>
<line x1="495.06" y1="213.24" x2="511.56" y2="213.24" stroke-width="1.8" stroke-opacity="0.9"/>
<line x1="495.06" y1="228.22" x2="511.56" y2="228.22" stroke-width="1.8" stroke-opacity="0.8"/>
<line x1="495.06" y1="231.02" x2="511.56" y2="231.02" stroke-width="1.8" stroke-opacity="0.9"/>
<line x1="495.06" y1="246.00" x2="511.56" y2="246.00" stroke-width="1.8" stroke-opacity="0.8"/>
<line x1="495.06" y1="248.80" x2="511.56" y2="248.80" stroke-width="1.8" stroke-opacity="0.9"/>
<line x1="495.06" y1="263.78" x2="511.56" y2="263.78" stroke-width="1.8" stroke-opacity="0.8"/>
<line x1="495.06" y1="266.58" x2="511.56" y2="266.58" stroke-width="1.8" stroke-opacity="0.9"/>
<line x1="495.06" y1="281.56" x2="511.56" y2="281.56" stroke-width="1.8" stroke-opacity="0.8"/>
<line x1="495.06" y1="284.36" x2="511.56" y2="284.36" stroke-width="1.8" stroke-opacity="0.9"/>
<line x1="495.06" y1="299.34" x2="511.56" y2="299.34" stroke-width="1.8" stroke-opacity="0.8"/>
<line x1="495.06" y1="302.14" x2="511.56" y2="302.14" stroke-width="1.8" stroke-opacity="0.9"/>
<line x1="495.06" y1="317.12" x2="511.56" y2="317.12" stroke-width="1.8" stroke-opacity="0.8"/>
<line x1="495.06" y1="319.92" x2="511.56" y2="319.92" stroke-width="1.8" stroke-opacity="0.9"/>
<line x1="495.06" y1="334.90" x2="511.56" y2="334.90" stroke-width="1.8" stroke-opacity="0.8"/>
<line x1="495.06" y1="337.70" x2="511.56" y2="337.70" stroke-width="1.8" stroke-opacity="0.9"/>
<line x1="495.06" y1="352.68" x2="511.56" y2="352.68" stroke-width="1.8" stroke-opacity="0.8"/>
<line x1="495.06" y1="355.48" x2="511.56" y2="355.48" stroke-width="1.8" stroke-opacity="0.9"/>
<line x1="495.06" y1="370.46" x2="511.56" y2="370.46" stroke-width="1.8" stroke-opacity="0.8"/>
<line x1="495.06" y1="373.26" x2="511.56" y2="373.26" stroke-width="1.8" stroke-opacity="0.9"/>
<line x1="495.06" y1="388.24" x2="511.56" y2="388.24" stroke-width="1.8" stroke-opacity="0.8"/>
<line x1="495.06" y1="391.04" x2="511.56" y2="391.04" stroke-width="1.8" stroke-opacity="0.9"/>
<line x1="495.06" y1="406.02" x2="511.56" y2="406.02" stroke-width="1.8" stroke-opacity="0.8"/>
<line x1="495.06" y1="408.82" x2="511.56" y2="408.82" stroke-width="1.8" stroke-opacity="0.9"/>
<line x1="495.06" y1="423.80" x2="511.56" y2="423.80" stroke-width="1.8" stroke-opacity="0.8"/>
<line x1="495.06" y1="426.60" x2="511.56" y2="426.60" stroke-width="1.8" stroke-opacity="0.9"/>
<line x1="495.06" y1="442.28" x2="513.56" y2="442.28" stroke-width="1.2"/>
<line x1="495.06" y1="440.28" x2="511.06" y2="440.28" stroke-width="1.2" stroke-opacity="0.85"/>
</g>
<g stroke="#ff00ff" fill="none">
<line x1="496.06" y1="505.60" x2="496.06" y2="612.16" stroke-width="1.6"/>
<line x1="510.86" y1="505.60" x2="510.86" y2="612.16" stroke-width="2" stroke-opacity="0.8"/>
<line x1="513.46" y1="505.60" x2="513.46" y2="612.16" stroke-width="1.2"/>
<line x1="495.06" y1="506.20" x2="513.56" y2="506.20" stroke-width="1.2"/>
<line x1="495.06" y1="508.20" x2="511.06" y2="508.20" stroke-width="1.8" stroke-opacity="0.6"/>
<line x1="495.06" y1="522.06" x2="511.56" y2="522.06" stroke-width="1.8" stroke-opacity="0.8"/>
<line x1="495.06" y1="524.86" x2="511.56" y2="524.86" stroke-width="1.8" stroke-opacity="0.9"/>
<line x1="495.06" y1="539.82" x2="511.56" y2="539.82" stroke-width="1.8" stroke-opacity="0.8"/>
<line x1="495.06" y1="542.62" x2="511.56" y2="542.62" stroke-width="1.8" stroke-opacity="0.9"/>
<line x1="495.06" y1="557.58" x2="511.56" y2="557.58" stroke-width="1.8" stroke-opacity="0.8"/>
<line x1="495.06" y1="560.38" x2="511.56" y2="560.38" stroke-width="1.8" stroke-opacity="0.9"/>
<line x1="495.06" y1="575.34" x2="511.56" y2="575.34" stroke-width="1.8" stroke-opacity="0.8"/>
<line x1="495.06" y1="578.14" x2="511.56" y2="578.14" stroke-width="1.8" stroke-opacity="0.9"/>
<line x1="495.06" y1="593.10" x2="511.56" y2="593.10" stroke-width="1.8" stroke-opacity="0.8"/>
<line x1="495.06" y1="595.90" x2="511.56" y2="595.90" stroke-width="1.8" stroke-opacity="0.9"/>
</g>
<g stroke="#ff00ff" fill="none">
<line x1="526.05" y1="-20.12" x2="526.05" y2="104.20" stroke-width="1.6"/>
<line x1="540.85" y1="-20.12" x2="540.85" y2="104.20" stroke-width="2" stroke-opacity="0.8"/>
<line x1="543.45" y1="-20.12" x2="543.45" y2="104.20" stroke-width="1.2"/>
<line x1="525.05" y1="-3.66" x2="541.55" y2="-3.66" stroke-width="1.8" stroke-opacity="0.8"/>
<line x1="525.05" y1="-0.86" x2="541.55" y2="-0.86" stroke-width="1.8" stroke-opacity="0.9"/>
<line x1="525.05" y1="14.10" x2="541.55" y2="14.10" stroke-width="1.8" stroke-opacity="0.8"/>
<line x1="525.05" y1="16.90" x2="541.55" y2="16.90" stroke-width="1.8" stroke-opacity="0.9"/>
<line x1="525.05" y1="31.86" x2="541.55" y2="31.86" stroke-width="1.8" stroke-opacity="0.8"/>
<line x1="525.05" y1="34.66" x2="541.55" y2="34.66" stroke-width="1.8" stroke-opacity="0.9"/>
<line x1="525.05" y1="49.62" x2="541.55" y2="49.62" stroke-width="1.8" stroke-opacity="0.8"/>
<line x1="525.05" y1="52.42" x2="541.55" y2="52.42" stroke-width="1.8" stroke-opacity="0.9"/>
<line x1="525.05" y1="67.38" x2="541.55" y2="67.38" stroke-width="1.8" stroke-opacity="0.8"/>
<line x1="525.05" y1="70.18" x2="541.55" y2="70.18" stroke-width="1.8" stroke-opacity="0.9"/>
<line x1="525.05" y1="85.14" x2="541.55" y2="85.14" stroke-width="1.8" stroke-opacity="0.8"/>
<line x1="525.05" y1="87.94" x2="541.55" y2="87.94" stroke-width="1.8" stroke-opacity="0.9"/>
<line x1="525.05" y1="103.60" x2="543.55" y2="103.60" stroke-width="1.2"/>
<line x1="525.05" y1="101.60" x2="541.05" y2="101.60" stroke-width="1.2" stroke-opacity="0.85"/>
</g>
<g stroke="#ff00ff" fill="none">
<line x1="526.05" y1="149.60" x2="526.05" y2="451.86" stroke-width="1.6"/>
<line x1="540.85" y1="149.60" x2="540.85" y2="451.86" stroke-width="2" stroke-opacity="0.8"/>
<line x1="543.45" y1="149.60" x2="543.45" y2="451.86" stroke-width="1.2"/>
<line x1="525.05" y1="150.20" x2="543.55" y2="150.20" stroke-width="1.2"/>
<line x1="525.05" y1="152.20" x2="541.05" y2="152.20" stroke-width="1.8" stroke-opacity="0.6"/>
<line x1="525.05" y1="166.08" x2="541.55" y2="166.08" stroke-width="1.8" stroke-opacity="0.8"/>
<line x1="525.05" y1="168.88" x2="541.55" y2="168.88" stroke-width="1.8" stroke-opacity="0.9"/>
<line x1="525.05" y1="183.86" x2="541.55" y2="183.86" stroke-width="1.8" stroke-opacity="0.8"/>
<line x1="525.05" y1="186.66" x2="541.55" y2="186.66" stroke-width="1.8" stroke-opacity="0.9"/>
<line x1="525.05" y1="201.64" x2="541.55" y2="201.64" stroke-width="1.8" stroke-opacity="0.8"/>
<line x1="525.05" y1="204.44" x2="541.55" y2="204.44" stroke-width="1.8" stroke-opacity="0.9"/>
<line x1="525.05" y1="219.42" x2="541.55" y2="219.42" stroke-width="1.8" stroke-opacity="0.8"/>
<line x1="525.05" y1="222.22" x2="541.55" y2="222.22" stroke-width="1.8" stroke-opacity="0.9"/>
<line x1="525.05" y1="237.20" x2="541.55" y2="237.20" stroke-width="1.8" stroke-opacity="0.8"/>
<line x1="525.05" y1="240.00" x2="541.55" y2="240.00" stroke-width="1.8" stroke-opacity="0.9"/>
<line x1="525.05" y1="254.98" x2="541.55" y2="254.98" stroke-width="1.8" stroke-opacity="0.8"/>
<line x1="525.05" y1="257.78" x2="541.55" y2="257.78" stroke-width="1.8" stroke-opacity="0.9"/>
<line x1="525.05" y1="272.76" x2="541.55" y2="272.76" stroke-width="1.8" stroke-opacity="0.8"/>
<line x1="525.05" y1="275.56" x2="541.55" y2="275.56" stroke-width="1.8" stroke-opacity="0.9"/>
<line x1="525.05" y1="290.54" x2="541.55" y2="290.54" stroke-width="1.8" stroke-opacity="0.8"/>
<line x1="525.05" y1="293.34" x2="541.55" y2="293.34" stroke-width="1.8" stroke-opacity="0.9"/>
<line x1="525.05" y1="308.32" x2="541.55" y2="308.32" stroke-width="1.8" stroke-opacity="0.8"/>
<line x1="525.05" y1="311.12" x2="541.55" y2="311.12" stroke-width="1.8" stroke-opacity="0.9"/>
<line x1="525.05" y1="326.10" x2="541.55" y2="326.10" stroke-width="1.8" stroke-opacity="0.8"/>
<line x1="525.05" y1="328.90" x2="541.55" y2="328.90" stroke-width="1.8" stroke-opacity="0.9"/>
<line x1="525.05" y1="343.88" x2="541.55" y2="343.88" stroke-width="1.8" stroke-opacity="0.8"/>
<line x1="525.05" y1="346.68" x2="541.55" y2="346.68" stroke-width="1.8" stroke-opacity="0.9"/>
<line x1="525.05" y1="361.66" x2="541.55" y2="361.66" stroke-width="1.8" stroke-opacity="0.8"/>
<line x1="525.05" y1="364.46" x2="541.55" y2="364.46" stroke-width="1.8" stroke-opacity="0.9"/>
<line x1="525.05" y1="379.44" x2="541.55" y2="379.44" stroke-width="1.8" stroke-opacity="0.8"/>
<line x1="525.05" y1="382.24" x2="541.55" y2="382.24" stroke-width="1.8" stroke-opacity="0.9"/>
<line x1="525.05" y1="397.22" x2="541.55" y2="397.22" stroke-width="1.8" stroke-opacity="0.8"/>
<line x1="525.05" y1="400.02" x2="541.55" y2="400.02" stroke-width="1.8" stroke-opacity="0.9"/>
<line x1="525.05" y1="415.00" x2="541.55" y2="415.00" stroke-width="1.8" stroke-opacity="0.8"/>
<line x1="525.05" y1="417.80" x2="541.55" y2="417.80" stroke-width="1.8" stroke-opacity="0.9"/>
<line x1="525.05" y1="432.78" x2="541.55" y2="432.78" stroke-width="1.8" stroke-opacity="0.8"/>
<line x1="525.05" y1="435.58" x2="541.55" y2="435.58" stroke-width="1.8" stroke-opacity="0.9"/>
<line x1="525.05" y1="451.26" x2="543.55" y2="451.26" stroke-width="1.2"/>
<line x1="525.05" y1="449.26" x2="541.05" y2="449.26" stroke-width="1.2" stroke-opacity="0.85"/>
</g>
<g stroke="#ff00ff" fill="none">
<line x1="526.05" y1="496.70" x2="526.05" y2="603.26" stroke-width="1.6"/>
<line x1="540.85" y1="496.70" x2="540.85" y2="603.26" stroke-width="2" stroke-opacity="0.8"/>
<line x1="543.45" y1="496.70" x2="543.45" y2="603.26" stroke-width="1.2"/>
<line x1="525.05" y1="497.30" x2="543.55" y2="497.30" stroke-width="1.2"/>
<line x1="525.05" y1="499.30" x2="541.05" y2="499.30" stroke-width="1.8" stroke-opacity="0.6"/>
<line x1="525.05" y1="513.16" x2="541.55" y2="513.16" stroke-width="1.8" stroke-opacity="0.8"/>
<line x1="525.05" y1="515.96" x2="541.55" y2="515.96" stroke-width="1.8" stroke-opacity="0.9"/>
<line x1="525.05" y1="530.92" x2="541.55" y2="530.92" stroke-width="1.8" stroke-opacity="0.8"/>
<line x1="525.05" y1="533.72" x2="541.55" y2="533.72" stroke-width="1.8" stroke-opacity="0.9"/>
<line x1="525.05" y1="548.68" x2="541.55" y2="548.68" stroke-width="1.8" stroke-opacity="0.8"/>
<line x1="525.05" y1="551.48" x2="541.55" y2="551.48" stroke-width="1.8" stroke-opacity="0.9"/>
<line x1="525.05" y1="566.44" x2="541.55" y2="566.44" stroke-width="1.8" stroke-opacity="0.8"/>
<line x1="525.05" y1="569.24" x2="541.55" y2="569.24" stroke-width="1.8" stroke-opacity="0.9"/>
<line x1="525.05" y1="584.20" x2="541.55" y2="584.20" stroke-width="1.8" stroke-opacity="0.8"/>
<line x1="525.05" y1="587.00" x2="541.55" y2="587.00" stroke-width="1.8" stroke-opacity="0.9"/>
<line x1="525.05" y1="602.66" x2="543.55" y2="602.66" stroke-width="1.2"/>
<line x1="525.05" y1="600.66" x2="541.05" y2="600.66" stroke-width="1.2" stroke-opacity="0.85"/>
</g>
<g stroke="#ff00ff" fill="none">
<line x1="556.04" y1="-28.82" x2="556.04" y2="95.50" stroke-width="1.6"/>
<line x1="570.84" y1="-28.82" x2="570.84" y2="95.50" stroke-width="2" stroke-opacity="0.8"/>
<line x1="573.44" y1="-28.82" x2="573.44" y2="95.50" stroke-width="1.2"/>
<line x1="555.04" y1="5.40" x2="571.54" y2="5.40" stroke-width="1.8" stroke-opacity="0.8"/>
<line x1="555.04" y1="8.20" x2="571.54" y2="8.20" stroke-width="1.8" stroke-opacity="0.9"/>
<line x1="555.04" y1="23.16" x2="571.54" y2="23.16" stroke-width="1.8" stroke-opacity="0.8"/>
<line x1="555.04" y1="25.96" x2="571.54" y2="25.96" stroke-width="1.8" stroke-opacity="0.9"/>
<line x1="555.04" y1="40.92" x2="571.54" y2="40.92" stroke-width="1.8" stroke-opacity="0.8"/>
<line x1="555.04" y1="43.72" x2="571.54" y2="43.72" stroke-width="1.8" stroke-opacity="0.9"/>
<line x1="555.04" y1="58.68" x2="571.54" y2="58.68" stroke-width="1.8" stroke-opacity="0.8"/>
<line x1="555.04" y1="61.48" x2="571.54" y2="61.48" stroke-width="1.8" stroke-opacity="0.9"/>
<line x1="555.04" y1="76.44" x2="571.54" y2="76.44" stroke-width="1.8" stroke-opacity="0.8"/>
<line x1="555.04" y1="79.24" x2="571.54" y2="79.24" stroke-width="1.8" stroke-opacity="0.9"/>
<line x1="555.04" y1="94.90" x2="573.54" y2="94.90" stroke-width="1.2"/>
<line x1="555.04" y1="92.90" x2="571.04" y2="92.90" stroke-width="1.2" stroke-opacity="0.85"/>
</g>
<g stroke="#ff00ff" fill="none">
<line x1="556.04" y1="158.40" x2="556.04" y2="442.88" stroke-width="1.6"/>
<line x1="570.84" y1="158.40" x2="570.84" y2="442.88" stroke-width="2" stroke-opacity="0.8"/>
<line x1="573.44" y1="158.40" x2="573.44" y2="442.88" stroke-width="1.2"/>
<line x1="555.04" y1="159.00" x2="573.54" y2="159.00" stroke-width="1.2"/>
<line x1="555.04" y1="161.00" x2="571.04" y2="161.00" stroke-width="1.8" stroke-opacity="0.6"/>
<line x1="555.04" y1="174.88" x2="571.54" y2="174.88" stroke-width="1.8" stroke-opacity="0.8"/>
<line x1="555.04" y1="177.68" x2="571.54" y2="177.68" stroke-width="1.8" stroke-opacity="0.9"/>
<line x1="555.04" y1="192.66" x2="571.54" y2="192.66" stroke-width="1.8" stroke-opacity="0.8"/>
<line x1="555.04" y1="195.46" x2="571.54" y2="195.46" stroke-width="1.8" stroke-opacity="0.9"/>
<line x1="555.04" y1="210.44" x2="571.54" y2="210.44" stroke-width="1.8" stroke-opacity="0.8"/>
<line x1="555.04" y1="213.24" x2="571.54" y2="213.24" stroke-width="1.8" stroke-opacity="0.9"/>
<line x1="555.04" y1="228.22" x2="571.54" y2="228.22" stroke-width="1.8" stroke-opacity="0.8"/>
<line x1="555.04" y1="231.02" x2="571.54" y2="231.02" stroke-width="1.8" stroke-opacity="0.9"/>
<line x1="555.04" y1="246.00" x2="571.54" y2="246.00" stroke-width="1.8" stroke-opacity="0.8"/>
<line x1="555.04" y1="248.80" x2="571.54" y2="248.80" stroke-width="1.8" stroke-opacity="0.9"/>
<line x1="555.04" y1="263.78" x2="571.54" y2="263.78" stroke-width="1.8" stroke-opacity="0.8"/>
<line x1="555.04" y1="266.58" x2="571.54" y2="266.58" stroke-width="1.8" stroke-opacity="0.9"/>
<line x1="555.04" y1="281.56" x2="571.54" y2="281.56" stroke-width="1.8" stroke-opacity="0.8"/>
<line x1="555.04" y1="284.36" x2="571.54" y2="284.36" stroke-width="1.8" stroke-opacity="0.9"/>
<line x1="555.04" y1="299.34" x2="571.54" y2="299.34" stroke-width="1.8" stroke-opacity="0.8"/>
<line x1="555.04" y1="302.14" x2="571.54" y2="302.14" stroke-width="1.8" stroke-opacity="0.9"/>
<line x1="555.04" y1="317.12" x2="571.54" y2="317.12" stroke-width="1.8" stroke-opacity="0.8"/>
<line x1="555.04" y1="319.92" x2="571.54" y2="319.92" stroke-width="1.8" stroke-opacity="0.9"/>
<line x1="555.04" y1="334.90" x2="571.54" y2="334.90" stroke-width="1.8" stroke-opacity="0.8"/>
<line x1="555.04" y1="337.70" x2="571.54" y2="337.70" stroke-width="1.8" stroke-opacity="0.9"/>
<line x1="555.04" y1="352.68" x2="571.54" y2="352.68" stroke-width="1.8" stroke-opacity="0.8"/>
<line x1="555.04" y1="355.48" x2="571.54" y2="355.48" stroke-width="1.8" stroke-opacity="0.9"/>
<line x1="555.04" y1="370.46" x2="571.54" y2="370.46" stroke-width="1.8" stroke-opacity="0.8"/>
<line x1="555.04" y1="373.26" x2="571.54" y2="373.26" stroke-width="1.8" stroke-opacity="0.9"/>
<line x1="555.04" y1="388.24" x2="571.54" y2="388.24" stroke-width="1.8" stroke-opacity="0.8"/>
<line x1="555.04" y1="391.04" x2="571.54" y2="391.04" stroke-width="1.8" stroke-opacity="0.9"/>
<line x1="555.04" y1="406.02" x2="571.54" y2="406.02" stroke-width="1.8" stroke-opacity="0.8"/>
<line x1="555.04" y1="408.82" x2="571.54" y2="408.82" stroke-width="1.8" stroke-opacity="0.9"/>
<line x1="555.04" y1="423.80" x2="571.54" y2="423.80" stroke-width="1.8" stroke-opacity="0.8"/>
<line x1="555.04" y1="426.60" x2="571.54" y2="426.60" stroke-width="1.8" stroke-opacity="0.9"/>
<line x1="555.04" y1="442.28" x2="573.54" y2="442.28" stroke-width="1.2"/>
<line x1="555.04" y1="440.28" x2="571.04" y2="440.28" stroke-width="1.2" stroke-opacity="0.85"/>
</g>
<g stroke="#ff00ff" fill="none">
<line x1="556.04" y1="505.60" x2="556.04" y2="612.16" stroke-width="1.6"/>
<line x1="570.84" y1="505.60" x2="570.84" y2="612.16" stroke-width="2" stroke-opacity="0.8"/>
<line x1="573.44" y1="505.60" x2="573.44" y2="612.16" stroke-width="1.2"/>
<line x1="555.04" y1="506.20" x2="573.54" y2="506.20" stroke-width="1.2"/>
<line x1="555.04" y1="508.20" x2="571.04" y2="508.20" stroke-width="1.8" stroke-opacity="0.6"/>
<line x1="555.04" y1="522.06" x2="571.54" y2="522.06" stroke-width="1.8" stroke-opacity="0.8"/>
<line x1="555.04" y1="524.86" x2="571.54" y2="524.86" stroke-width="1.8" stroke-opacity="0.9"/>
<line x1="555.04" y1="539.82" x2="571.54" y2="539.82" stroke-width="1.8" stroke-opacity="0.8"/>
<line x1="555.04" y1="542.62" x2="571.54" y2="542.62" stroke-width="1.8" stroke-opacity="0.9"/>
<line x1="555.04" y1="557.58" x2="571.54" y2="557.58" stroke-width="1.8" stroke-opacity="0.8"/>
<line x1="555.04" y1="560.38" x2="571.54" y2="560.38" stroke-width="1.8" stroke-opacity="0.9"/>
<line x1="555.04" y1="575.34" x2="571.54" y2="575.34" stroke-width="1.8" stroke-opacity="0.8"/>
<line x1="555.04" y1="578.14" x2="571.54" y2="578.14" stroke-width="1.8" stroke-opacity="0.9"/>
<line x1="555.04" y1="593.10" x2="571.54" y2="593.10" stroke-width="1.8" stroke-opacity="0.8"/>
<line x1="555.04" y1="595.90" x2="571.54" y2="595.90" stroke-width="1.8" stroke-opacity="0.9"/>
</g>
<g stroke="#ff00ff" fill="none">
<line x1="586.03" y1="-20.12" x2="586.03" y2="104.20" stroke-width="1.6"/>
<line x1="600.83" y1="-20.12" x2="600.83" y2="104.20" stroke-width="2" stroke-opacity="0.8"/>
<line x1="603.43" y1="-20.12" x2="603.43" y2="104.20" stroke-width="1.2"/>
<line x1="585.03" y1="-3.66" x2="601.53" y2="-3.66" stroke-width="1.8" stroke-opacity="0.8"/>
<line x1="585.03" y1="-0.86" x2="601.53" y2="-0.86" stroke-width="1.8" stroke-opacity="0.9"/>
<line x1="585.03" y1="14.10" x2="601.53" y2="14.10" stroke-width="1.8" stroke-opacity="0.8"/>
<line x1="585.03" y1="16.90" x2="601.53" y2="16.90" stroke-width="1.8" stroke-opacity="0.9"/>
<line x1="585.03" y1="31.86" x2="601.53" y2="31.86" stroke-width="1.8" stroke-opacity="0.8"/>
<line x1="585.03" y1="34.66" x2="601.53" y2="34.66" stroke-width="1.8" stroke-opacity="0.9"/>
<line x1="585.03" y1="49.62" x2="601.53" y2="49.62" stroke-width="1.8" stroke-opacity="0.8"/>
<line x1="585.03" y1="52.42" x2="601.53" y2="52.42" stroke-width="1.8" stroke-opacity="0.9"/>
<line x1="585.03" y1="67.38" x2="601.53" y2="67.38" stroke-width="1.8" stroke-opacity="0.8"/>
<line x1="585.03" y1="70.18" x2="601.53" y2="70.18" stroke-width="1.8" stroke-opacity="0.9"/>
<line x1="585.03" y1="85.14" x2="601.53" y2="85.14" stroke-width="1.8" stroke-opacity="0.8"/>
<line x1="585.03" y1="87.94" x2="601.53" y2="87.94" stroke-width="1.8" stroke-opacity="0.9"/>
<line x1="585.03" y1="103.60" x2="603.53" y2="103.60" stroke-width="1.2"/>
<line x1="585.03" y1="101.60" x2="601.03" y2="101.60" stroke-width="1.2" stroke-opacity="0.85"/>
</g>
<g stroke="#ff00ff" fill="none">
<line x1="586.03" y1="149.60" x2="586.03" y2="451.86" stroke-width="1.6"/>
<line x1="600.83" y1="149.60" x2="600.83" y2="451.86" stroke-width="2" stroke-opacity="0.8"/>
<line x1="603.43" y1="149.60" x2="603.43" y2="451.86" stroke-width="1.2"/>
<line x1="585.03" y1="150.20" x2="603.53" y2="150.20" stroke-width="1.2"/>
<line x1="585.03" y1="152.20" x2="601.03" y2="152.20" stroke-width="1.8" stroke-opacity="0.6"/>
<line x1="585.03" y1="166.08" x2="601.53" y2="166.08" stroke-width="1.8" stroke-opacity="0.8"/>
<line x1="585.03" y1="168.88" x2="601.53" y2="168.88" stroke-width="1.8" stroke-opacity="0.9"/>
<line x1="585.03" y1="183.86" x2="601.53" y2="183.86" stroke-width="1.8" stroke-opacity="0.8"/>
<line x1="585.03" y1="186.66" x2="601.53" y2="186.66" stroke-width="1.8" stroke-opacity="0.9"/>
<line x1="585.03" y1="201.64" x2="601.53" y2="201.64" stroke-width="1.8" stroke-opacity="0.8"/>
<line x1="585.03" y1="204.44" x2="601.53" y2="204.44" stroke-width="1.8" stroke-opacity="0.9"/>
<line x1="585.03" y1="219.42" x2="601.53" y2="219.42" stroke-width="1.8" stroke-opacity="0.8"/>
<line x1="585.03" y1="222.22" x2="601.53" y2="222.22" stroke-width="1.8" stroke-opacity="0.9"/>
<line x1="585.03" y1="237.20" x2="601.53" y2="237.20" stroke-width="1.8" stroke-opacity="0.8"/>
<line x1="585.03" y1="240.00" x2="601.53" y2="240.00" stroke-width="1.8" stroke-opacity="0.9"/>
<line x1="585.03" y1="254.98" x2="601.53" y2="254.98" stroke-width="1.8" stroke-opacity="0.8"/>
<line x1="585.03" y1="257.78" x2="601.53" y2="257.78" stroke-width="1.8" stroke-opacity="0.9"/>
<line x1="585.03" y1="272.76" x2="601.53" y2="272.76" stroke-width="1.8" stroke-opacity="0.8"/>
<line x1="585.03" y1="275.56" x2="601.53" y2="275.56" stroke-width="1.8" stroke-opacity="0.9"/>
<line x1="585.03" y1="290.54" x2="601.53" y2="290.54" stroke-width="1.8" stroke-opacity="0.8"/>
<line x1="585.03" y1="293.34" x2="601.53" y2="293.34" stroke-width="1.8" stroke-opacity="0.9"/>
<line x1="585.03" y1="308.32" x2="601.53" y2="308.32" stroke-width="1.8" stroke-opacity="0.8"/>
<line x1="585.03" y1="311.12" x2="601.53" y2="311.12" stroke-width="1.8" stroke-opacity="0.9"/>
<line x1="585.03" y1="326.10" x2="601.53" y2="326.10" stroke-width="1.8" stroke-opacity="0.8"/>
<line x1="585.03" y1="328.90" x2="601.53" y2="328.90" stroke-width="1.8" stroke-opacity="0.9"/>
<line x1="585.03" y1="343.88" x2="601.53" y2="343.88" stroke-width="1.8" stroke-opacity="0.8"/>
<line x1="585.03" y1="346.68" x2="601.53" y2="346.68" stroke-width="1.8" stroke-opacity="0.9"/>
<line x1="585.03" y1="361.66" x2="601.53" y2="361.66" stroke-width="1.8" stroke-opacity="0.8"/>
<line x1="585.03" y1="364.46" x2="601.53" y2="364.46" stroke-width="1.8" stroke-opacity="0.9"/>
<line x1="585.03" y1="379.44" x2="601.53" y2="379.44" stroke-width="1.8" stroke-opacity="0.8"/>
<line x1="585.03" y1="382.24" x2="601.53" y2="382.24" stroke-width="1.8" stroke-opacity="0.9"/>
<line x1="585.03" y1="397.22" x2="601.53" y2="397.22" stroke-width="1.8" stroke-opacity="0.8"/>
<line x1="585.03" y1="400.02" x2="601.53" y2="400.02" stroke-width="1.8" stroke-opacity="0.9"/>
<line x1="585.03" y1="415.00" x2="601.53" y2="415.00" stroke-width="1.8" stroke-opacity="0.8"/>
<line x1="585.03" y1="417.80" x2="601.53" y2="417.80" stroke-width="1.8" stroke-opacity="0.9"/>
<line x1="585.03" y1="432.78" x2="601.53" y2="432.78" stroke-width="1.8" stroke-opacity="0.8"/>
<line x1="585.03" y1="435.58" x2="601.53" y2="435.58" stroke-width="1.8" stroke-opacity="0.9"/>
<line x1="585.03" y1="451.26" x2="603.53" y2="451.26" stroke-width="1.2"/>
<line x1="585.03" y1="449.26" x2="601.03" y2="449.26" stroke-width="1.2" stroke-opacity="0.85"/>
</g>
<g stroke="#ff00ff" fill="none">
<line x1="586.03" y1="496.70" x2="586.03" y2="603.26" stroke-width="1.6"/>
<line x1="600.83" y1="496.70" x2="600.83" y2="603.26" stroke-width="2" stroke-opacity="0.8"/>
<line x1="603.43" y1="496.70" x2="603.43" y2="603.26" stroke-width="1.2"/>
<line x1="585.03" y1="497.30" x2="603.53" y2="497.30" stroke-width="1.2"/>
<line x1="585.03" y1="499.30" x2="601.03" y2="499.30" stroke-width="1.8" stroke-opacity="0.6"/>
<line x1="585.03" y1="513.16" x2="601.53" y2="513.16" stroke-width="1.8" stroke-opacity="0.8"/>
<line x1="585.03" y1="515.96" x2="601.53" y2="515.96" stroke-width="1.8" stroke-opacity="0.9"/>
<line x1="585.03" y1="530.92" x2="601.53" y2="530.92" stroke-width="1.8" stroke-opacity="0.8"/>
<line x1="585.03" y1="533.72" x2="601.53" y2="533.72" stroke-width="1.8" stroke-opacity="0.9"/>
<line x1="585.03" y1="548.68" x2="601.53" y2="548.68" stroke-width="1.8" stroke-opacity="0.8"/>
<line x1="585.03" y1="551.48" x2="601.53" y2="551.48" stroke-width="1.8" stroke-opacity="0.9"/>
<line x1="585.03" y1="566.44" x2="601.53" y2="566.44" stroke-width="1.8" stroke-opacity="0.8"/>
<line x1="585.03" y1="569.24" x2="601.53" y2="569.24" stroke-width="1.8" stroke-opacity="0.9"/>
<line x1="585.03" y1="584.20" x2="601.53" y2="584.20" stroke-width="1.8" stroke-opacity="0.8"/>
<line x1="585.03" y1="587.00" x2="601.53" y2="587.00" stroke-width="1.8" stroke-opacity="0.9"/>
<line x1="585.03" y1="602.66" x2="603.53" y2="602.66" stroke-width="1.2"/>
<line x1="585.03" y1="600.66" x2="601.03" y2="600.66" stroke-width="1.2" stroke-opacity="0.85"/>
</g>
<g stroke="#ff00ff" fill="none">
<line x1="616.02" y1="-28.82" x2="616.02" y2="95.50" stroke-width="1.6"/>
<line x1="630.82" y1="-28.82" x2="630.82" y2="95.50" stroke-width="2" stroke-opacity="0.8"/>
<line x1="633.42" y1="-28.82" x2="633.42" y2="95.50" stroke-width="1.2"/>
<line x1="615.02" y1="5.40" x2="631.52" y2="5.40" stroke-width="1.8" stroke-opacity="0.8"/>
<line x1="615.02" y1="8.20" x2="631.52" y2="8.20" stroke-width="1.8" stroke-opacity="0.9"/>
<line x1="615.02" y1="23.16" x2="631.52" y2="23.16" stroke-width="1.8" stroke-opacity="0.8"/>
<line x1="615.02" y1="25.96" x2="631.52" y2="25.96" stroke-width="1.8" stroke-opacity="0.9"/>
<line x1="615.02" y1="40.92" x2="631.52" y2="40.92" stroke-width="1.8" stroke-opacity="0.8"/>
<line x1="615.02" y1="43.72" x2="631.52" y2="43.72" stroke-width="1.8" stroke-opacity="0.9"/>
<line x1="615.02" y1="58.68" x2="631.52" y2="58.68" stroke-width="1.8" stroke-opacity="0.8"/>
<line x1="615.02" y1="61.48" x2="631.52" y2="61.48" stroke-width="1.8" stroke-opacity="0.9"/>
<line x1="615.02" y1="76.44" x2="631.52" y2="76.44" stroke-width="1.8" stroke-opacity="0.8"/>
<line x1="615.02" y1="79.24" x2="631.52" y2="79.24" stroke-width="1.8" stroke-opacity="0.9"/>
<line x1="615.02" y1="94.90" x2="633.52" y2="94.90" stroke-width="1.2"/>
<line x1="615.02" y1="92.90" x2="631.02" y2="92.90" stroke-width="1.2" stroke-opacity="0.85"/>
</g>
<g stroke="#ff00ff" fill="none">
<line x1="616.02" y1="158.40" x2="616.02" y2="442.88" stroke-width="1.6"/>
<line x1="630.82" y1="158.40" x2="630.82" y2="442.88" stroke-width="2" stroke-opacity="0.8"/>
<line x1="633.42" y1="158.40" x2="633.42" y2="442.88" stroke-width="1.2"/>
<line x1="615.02" y1="159.00" x2="633.52" y2="159.00" stroke-width="1.2"/>
<line x1="615.02" y1="161.00" x2="631.02" y2="161.00" stroke-width="1.8" stroke-opacity="0.6"/>
<line x1="615.02" y1="174.88" x2="631.52" y2="174.88" stroke-width="1.8" stroke-opacity="0.8"/>
<line x1="615.02" y1="177.68" x2="631.52" y2="177.68" stroke-width="1.8" stroke-opacity="0.9"/>
<line x1="615.02" y1="192.66" x2="631.52" y2="192.66" stroke-width="1.8" stroke-opacity="0.8"/>
<line x1="615.02" y1="195.46" x2="631.52" y2="195.46" stroke-width="1.8" stroke-opacity="0.9"/>
<line x1="615.02" y1="210.44" x2="631.52" y2="210.44" stroke-width="1.8" stroke-opacity="0.8"/>
<line x1="615.02" y1="213.24" x2="631.52" y2="213.24" stroke-width="1.8" stroke-opacity="0.9"/>
<line x1="615.02" y1="228.22" x2="631.52" y2="228.22" stroke-width="1.8" stroke-opacity="0.8"/>
<line x1="615.02" y1="231.02" x2="631.52" y2="231.02" stroke-width="1.8" stroke-opacity="0.9"/>
<line x1="615.02" y1="246.00" x2="631.52" y2="246.00" stroke-width="1.8" stroke-opacity="0.8"/>
<line x1="615.02" y1="248.80" x2="631.52" y2="248.80" stroke-width="1.8" stroke-opacity="0.9"/>
<line x1="615.02" y1="263.78" x2="631.52" y2="263.78" stroke-width="1.8" stroke-opacity="0.8"/>
<line x1="615.02" y1="266.58" x2="631.52" y2="266.58" stroke-width="1.8" stroke-opacity="0.9"/>
<line x1="615.02" y1="281.56" x2="631.52" y2="281.56" stroke-width="1.8" stroke-opacity="0.8"/>
<line x1="615.02" y1="284.36" x2="631.52" y2="284.36" stroke-width="1.8" stroke-opacity="0.9"/>
<line x1="615.02" y1="299.34" x2="631.52" y2="299.34" stroke-width="1.8" stroke-opacity="0.8"/>
<line x1="615.02" y1="302.14" x2="631.52" y2="302.14" stroke-width="1.8" stroke-opacity="0.9"/>
<line x1="615.02" y1="317.12" x2="631.52" y2="317.12" stroke-width="1.8" stroke-opacity="0.8"/>
<line x1="615.02" y1="319.92" x2="631.52" y2="319.92" stroke-width="1.8" stroke-opacity="0.9"/>
<line x1="615.02" y1="334.90" x2="631.52" y2="334.90" stroke-width="1.8" stroke-opacity="0.8"/>
<line x1="615.02" y1="337.70" x2="631.52" y2="337.70" stroke-width="1.8" stroke-opacity="0.9"/>
<line x1="615.02" y1="352.68" x2="631.52" y2="352.68" stroke-width="1.8" stroke-opacity="0.8"/>
<line x1="615.02" y1="355.48" x2="631.52" y2="355.48" stroke-width="1.8" stroke-opacity="0.9"/>
<line x1="615.02" y1="370.46" x2="631.52" y2="370.46" stroke-width="1.8" stroke-opacity="0.8"/>
<line x1="615.02" y1="373.26" x2="631.52" y2="373.26" stroke-width="1.8" stroke-opacity="0.9"/>
<line x1="615.02" y1="388.24" x2="631.52" y2="388.24" stroke-width="1.8" stroke-opacity="0.8"/>
<line x1="615.02" y1="391.04" x2="631.52" y2="391.04" stroke-width="1.8" stroke-opacity="0.9"/>
<line x1="615.02" y1="406.02" x2="631.52" y2="406.02" stroke-width="1.8" stroke-opacity="0.8"/>
<line x1="615.02" y1="408.82" x2="631.52" y2="408.82" stroke-width="1.8" stroke-opacity="0.9"/>
<line x1="615.02" y1="423.80" x2="631.52" y2="423.80" stroke-width="1.8" stroke-opacity="0.8"/>
<line x1="615.02" y1="426.60" x2="631.52" y2="426.60" stroke-width="1.8" stroke-opacity="0.9"/>
<line x1="615.02" y1="442.28" x2="633.52" y2="442.28" stroke-width="1.2"/>
<line x1="615.02" y1="440.28" x2="631.02" y2="440.28" stroke-width="1.2" stroke-opacity="0.85"/>
</g>
<g stroke="#ff00ff" fill="none">
<line x1="616.02" y1="505.60" x2="616.02" y2="612.16" stroke-width="1.6"/>
<line x1="630.82" y1="505.60" x2="630.82" y2="612.16" stroke-width="2" stroke-opacity="0.8"/>
<line x1="633.42" y1="505.60" x2="633.42" y2="612.16" stroke-width="1.2"/>
<line x1="615.02" y1="506.20" x2="633.52" y2="506.20" stroke-width="1.2"/>
<line x1="615.02" y1="508.20" x2="631.02" y2="508.20" stroke-width="1.8" stroke-opacity="0.6"/>
<line x1="615.02" y1="522.06" x2="631.52" y2="522.06" stroke-width="1.8" stroke-opacity="0.8"/>
<line x1="615.02" y1="524.86" x2="631.52" y2="524.86" stroke-width="1.8" stroke-opacity="0.9"/>
<line x1="615.02" y1="539.82" x2="631.52" y2="539.82" stroke-width="1.8" stroke-opacity="0.8"/>
<line x1="615.02" y1="542.62" x2="631.52" y2="542.62" stroke-width="1.8" stroke-opacity="0.9"/>
<line x1="615.02" y1="557.58" x2="631.52" y2="557.58" stroke-width="1.8" stroke-opacity="0.8"/>
<line x1="615.02" y1="560.38" x2="631.52" y2="560.38" stroke-width="1.8" stroke-opacity="0.9"/>
<line x1="615.02" y1="575.34" x2="631.52" y2="575.34" stroke-width="1.8" stroke-opacity="0.8"/>
<line x1="615.02" y1="578.14" x2="631.52" y2="578.14" stroke-width="1.8" stroke-opacity="0.9"/>
<line x1="615.02" y1="593.10" x2="631.52" y2="593.10" stroke-width="1.8" stroke-opacity="0.8"/>
<line x1="615.02" y1="595.90" x2="631.52" y2="595.90" stroke-width="1.8" stroke-opacity="0.9"/>
</g>
<g stroke="#ff00ff" fill="none">
<line x1="646.01" y1="-20.12" x2="646.01" y2="104.20" stroke-width="1.6"/>
<line x1="660.81" y1="-20.12" x2="660.81" y2="104.20" stroke-width="2" stroke-opacity="0.8"/>
<line x1="663.41" y1="-20.12" x2="663.41" y2="104.20" stroke-width="1.2"/>
<line x1="645.01" y1="-3.66" x2="661.51" y2="-3.66" stroke-width="1.8" stroke-opacity="0.8"/>
<line x1="645.01" y1="-0.86" x2="661.51" y2="-0.86" stroke-width="1.8" stroke-opacity="0.9"/>
<line x1="645.01" y1="14.10" x2="661.51" y2="14.10" stroke-width="1.8" stroke-opacity="0.8"/>
<line x1="645.01" y1="16.90" x2="661.51" y2="16.90" stroke-width="1.8" stroke-opacity="0.9"/>
<line x1="645.01" y1="31.86" x2="661.51" y2="31.86" stroke-width="1.8" stroke-opacity="0.8"/>
<line x1="645.01" y1="34.66" x2="661.51" y2="34.66" stroke-width="1.8" stroke-opacity="0.9"/>
<line x1="645.01" y1="49.62" x2="661.51" y2="49.62" stroke-width="1.8" stroke-opacity="0.8"/>
<line x1="645.01" y1="52.42" x2="661.51" y2="52.42" stroke-width="1.8" stroke-opacity="0.9"/>
<line x1="645.01" y1="67.38" x2="661.51" y2="67.38" stroke-width="1.8" stroke-opacity="0.8"/>
<line x1="645.01" y1="70.18" x2="661.51" y2="70.18" stroke-width="1.8" stroke-opacity="0.9"/>
<line x1="645.01" y1="85.14" x2="661.51" y2="85.14" stroke-width="1.8" stroke-opacity="0.8"/>
<line x1="645.01" y1="87.94" x2="661.51" y2="87.94" stroke-width="1.8" stroke-opacity="0.9"/>
<line x1="645.01" y1="103.60" x2="663.51" y2="103.60" stroke-width="1.2"/>
<line x1="645.01" y1="101.60" x2="661.01" y2="101.60" stroke-width="1.2" stroke-opacity="0.85"/>
</g>
<g stroke="#ff00ff" fill="none">
<line x1="646.01" y1="149.60" x2="646.01" y2="451.86" stroke-width="1.6"/>
<line x1="660.81" y1="149.60" x2="660.81" y2="451.86" stroke-width="2" stroke-opacity="0.8"/>
<line x1="663.41" y1="149.60" x2="663.41" y2="451.86" stroke-width="1.2"/>
<line x1="645.01" y1="150.20" x2="663.51" y2="150.20" stroke-width="1.2"/>
<line x1="645.01" y1="152.20" x2="661.01" y2="152.20" stroke-width="1.8" stroke-opacity="0.6"/>
<line x1="645.01" y1="166.08" x2="661.51" y2="166.08" stroke-width="1.8" stroke-opacity="0.8"/>
<line x1="645.01" y1="168.88" x2="661.51" y2="168.88" stroke-width="1.8" stroke-opacity="0.9"/>
<line x1="645.01" y1="183.86" x2="661.51" y2="183.86" stroke-width="1.8" stroke-opacity="0.8"/>
<line x1="645.01" y1="186.66" x2="661.51" y2="186.66" stroke-width="1.8" stroke-opacity="0.9"/>
<line x1="645.01" y1="201.64" x2="661.51" y2="201.64" stroke-width="1.8" stroke-opacity="0.8"/>
<line x1="645.01" y1="204.44" x2="661.51" y2="204.44" stroke-width="1.8" stroke-opacity="0.9"/>
<line x1="645.01" y1="219.42" x2="661.51" y2="219.42" stroke-width="1.8" stroke-opacity="0.8"/>
<line x1="645.01" y1="222.22" x2="661.51" y2="222.22" stroke-width="1.8" stroke-opacity="0.9"/>
<line x1="645.01" y1="237.20" x2="661.51" y2="237.20" stroke-width="1.8" stroke-opacity="0.8"/>
<line x1="645.01" y1="240.00" x2="661.51" y2="240.00" stroke-width="1.8" stroke-opacity="0.9"/>
<line x1="645.01" y1="254.98" x2="661.51" y2="254.98" stroke-width="1.8" stroke-opacity="0.8"/>
<line x1="645.01" y1="257.78" x2="661.51" y2="257.78" stroke-width="1.8" stroke-opacity="0.9"/>
<line x1="645.01" y1="272.76" x2="661.51" y2="272.76" stroke-width="1.8" stroke-opacity="0.8"/>
<line x1="645.01" y1="275.56" x2="661.51" y2="275.56" stroke-width="1.8" stroke-opacity="0.9"/>
<line x1="645.01" y1="290.54" x2="661.51" y2="290.54" stroke-width="1.8" stroke-opacity="0.8"/>
<line x1="645.01" y1="293.34" x2="661.51" y2="293.34" stroke-width="1.8" stroke-opacity="0.9"/>
<line x1="645.01" y1="308.32" x2="661.51" y2="308.32" stroke-width="1.8" stroke-opacity="0.8"/>
<line x1="645.01" y1="311.12" x2="661.51" y2="311.12" stroke-width="1.8" stroke-opacity="0.9"/>
<line x1="645.01" y1="326.10" x2="661.51" y2="326.10" stroke-width="1.8" stroke-opacity="0.8"/>
<line x1="645.01" y1="328.90" x2="661.51" y2="328.90" stroke-width="1.8" stroke-opacity="0.9"/>
<line x1="645.01" y1="343.88" x2="661.51" y2="343.88" stroke-width="1.8" stroke-opacity="0.8"/>
<line x1="645.01" y1="346.68" x2="661.51" y2="346.68" stroke-width="1.8" stroke-opacity="0.9"/>
<line x1="645.01" y1="361.66" x2="661.51" y2="361.66" stroke-width="1.8" stroke-opacity="0.8"/>
<line x1="645.01" y1="364.46" x2="661.51" y2="364.46" stroke-width="1.8" stroke-opacity="0.9"/>
<line x1="645.01" y1="379.44" x2="661.51" y2="379.44" stroke-width="1.8" stroke-opacity="0.8"/>
<line x1="645.01" y1="382.24" x2="661.51" y2="382.24" stroke-width="1.8" stroke-opacity="0.9"/>
<line x1="645.01" y1="397.22" x2="661.51" y2="397.22" stroke-width="1.8" stroke-opacity="0.8"/>
<line x1="645.01" y1="400.02" x2="661.51" y2="400.02" stroke-width="1.8" stroke-opacity="0.9"/>
<line x1="645.01" y1="415.00" x2="661.51" y2="415.00" stroke-width="1.8" stroke-opacity="0.8"/>
<line x1="645.01" y1="417.80" x2="661.51" y2="417.80" stroke-width="1.8" stroke-opacity="0.9"/>
<line x1="645.01" y1="432.78" x2="661.51" y2="432.78" stroke-width="1.8" stroke-opacity="0.8"/>
<line x1="645.01" y1="435.58" x2="661.51" y2="435.58" stroke-width="1.8" stroke-opacity="0.9"/>
<line x1="645.01" y1="451.26" x2="663.51" y2="451.26" stroke-width="1.2"/>
<line x1="645.01" y1="449.26" x2="661.01" y2="449.26" stroke-width="1.2" stroke-opacity="0.85"/>
</g>
<g stroke="#ff00ff" fill="none">
<line x1="646.01" y1="496.70" x2="646.01" y2="603.26" stroke-width="1.6"/>
<line x1="660.81" y1="496.70" x2="660.81" y2="603.26" stroke-width="2" stroke-opacity="0.8"/>
<line x1="663.41" y1="496.70" x2="663.41" y2="603.26" stroke-width="1.2"/>
<line x1="645.01" y1="497.30" x2="663.51" y2="497.30" stroke-width="1.2"/>
<line x1="645.01" y1="499.30" x2="661.01" y2="499.30" stroke-width="1.8" stroke-opacity="0.6"/>
<line x1="645.01" y1="513.16" x2="661.51" y2="513.16" stroke-width="1.8" stroke-opacity="0.8"/>
<line x1="645.01" y1="515.96" x2="661.51" y2="515.96" stroke-width="1.8" stroke-opacity="0.9"/>
<line x1="645.01" y1="530.92" x2="661.51" y2="530.92" stroke-width="1.8" stroke-opacity="0.8"/>
<line x1="645.01" y1="533.72" x2="661.51" y2="533.72" stroke-width="1.8" stroke-opacity="0.9"/>
<line x1="645.01" y1="548.68" x2="661.51" y2="548.68" stroke-width="1.8" stroke-opacity="0.8"/>
<line x1="645.01" y1="551.48" x2="661.51" y2="551.48" stroke-width="1.8" stroke-opacity="0.9"/>
<line x1="645.01" y1="566.44" x2="661.51" y2="566.44" stroke-width="1.8" stroke-opacity="0.8"/>
<line x1="645.01" y1="569.24" x2="661.51" y2="569.24" stroke-width="1.8" stroke-opacity="0.9"/>
<line x1="645.01" y1="584.20" x2="661.51" y2="584.20" stroke-width="1.8" stroke-opacity="0.8"/>
<line x1="645.01" y1="587.00" x2="661.51" y2="587.00" stroke-width="1.8" stroke-opacity="0.9"/>
<line x1="645.01" y1="602.66" x2="663.51" y2="602.66" stroke-width="1.2"/>
<line x1="645.01" y1="600.66" x2="661.01" y2="600.66" stroke-width="1.2" stroke-opacity="0.85"/>
</g>
<g stroke="#ff00ff" fill="none">
<line x1="676.00" y1="-28.82" x2="676.00" y2="95.50" stroke-width="1.6"/>
<line x1="690.80" y1="-28.82" x2="690.80" y2="95.50" stroke-width="2" stroke-opacity="0.8"/>
<line x1="693.40" y1="-28.82" x2="693.40" y2="95.50" stroke-width="1.2"/>
<line x1="675.00" y1="5.40" x2="691.50" y2="5.40" stroke-width="1.8" stroke-opacity="0.8"/>
<line x1="675.00" y1="8.20" x2="691.50" y2="8.20" stroke-width="1.8" stroke-opacity="0.9"/>
<line x1="675.00" y1="23.16" x2="691.50" y2="23.16" stroke-width="1.8" stroke-opacity="0.8"/>
<line x1="675.00" y1="25.96" x2="691.50" y2="25.96" stroke-width="1.8" stroke-opacity="0.9"/>
<line x1="675.00" y1="40.92" x2="691.50" y2="40.92" stroke-width="1.8" stroke-opacity="0.8"/>
<line x1="675.00" y1="43.72" x2="691.50" y2="43.72" stroke-width="1.8" stroke-opacity="0.9"/>
<line x1="675.00" y1="58.68" x2="691.50" y2="58.68" stroke-width="1.8" stroke-opacity="0.8"/>
<line x1="675.00" y1="61.48" x2="691.50" y2="61.48" stroke-width="1.8" stroke-opacity="0.9"/>
<line x1="675.00" y1="76.44" x2="691.50" y2="76.44" stroke-width="1.8" stroke-opacity="0.8"/>
<line x1="675.00" y1="79.24" x2="691.50" y2="79.24" stroke-width="1.8" stroke-opacity="0.9"/>
<line x1="675.00" y1="94.90" x2="693.50" y2="94.90" stroke-width="1.2"/>
<line x1="675.00" y1="92.90" x2="691.00" y2="92.90" stroke-width="1.2" stroke-opacity="0.85"/>
</g>
<g stroke="#ff00ff" fill="none">
<line x1="676.00" y1="158.40" x2="676.00" y2="442.88" stroke-width="1.6"/>
<line x1="690.80" y1="158.40" x2="690.80" y2="442.88" stroke-width="2" stroke-opacity="0.8"/>
<line x1="693.40" y1="158.40" x2="693.40" y2="442.88" stroke-width="1.2"/>
<line x1="675.00" y1="159.00" x2="693.50" y2="159.00" stroke-width="1.2"/>
<line x1="675.00" y1="161.00" x2="691.00" y2="161.00" stroke-width="1.8" stroke-opacity="0.6"/>
<line x1="675.00" y1="174.88" x2="691.50" y2="174.88" stroke-width="1.8" stroke-opacity="0.8"/>
<line x1="675.00" y1="177.68" x2="691.50" y2="177.68" stroke-width="1.8" stroke-opacity="0.9"/>
<line x1="675.00" y1="192.66" x2="691.50" y2="192.66" stroke-width="1.8" stroke-opacity="0.8"/>
<line x1="675.00" y1="195.46" x2="691.50" y2="195.46" stroke-width="1.8" stroke-opacity="0.9"/>
<line x1="675.00" y1="210.44" x2="691.50" y2="210.44" stroke-width="1.8" stroke-opacity="0.8"/>
<line x1="675.00" y1="213.24" x2="691.50" y2="213.24" stroke-width="1.8" stroke-opacity="0.9"/>
<line x1="675.00" y1="228.22" x2="691.50" y2="228.22" stroke-width="1.8" stroke-opacity="0.8"/>
<line x1="675.00" y1="231.02" x2="691.50" y2="231.02" stroke-width="1.8" stroke-opacity="0.9"/>
<line x1="675.00" y1="246.00" x2="691.50" y2="246.00" stroke-width="1.8" stroke-opacity="0.8"/>
<line x1="675.00" y1="248.80" x2="691.50" y2="248.80" stroke-width="1.8" stroke-opacity="0.9"/>
<line x1="675.00" y1="263.78" x2="691.50" y2="263.78" stroke-width="1.8" stroke-opacity="0.8"/>
<line x1="675.00" y1="266.58" x2="691.50" y2="266.58" stroke-width="1.8" stroke-opacity="0.9"/>
<line x1="675.00" y1="281.56" x2="691.50" y2="281.56" stroke-width="1.8" stroke-opacity="0.8"/>
<line x1="675.00" y1="284.36" x2="691.50" y2="284.36" stroke-width="1.8" stroke-opacity="0.9"/>
<line x1="675.00" y1="299.34" x2="691.50" y2="299.34" stroke-width="1.8" stroke-opacity="0.8"/>
<line x1="675.00" y1="302.14" x2="691.50" y2="302.14" stroke-width="1.8" stroke-opacity="0.9"/>
<line x1="675.00" y1="317.12" x2="691.50" y2="317.12" stroke-width="1.8" stroke-opacity="0.8"/>
<line x1="675.00" y1="319.92" x2="691.50" y2="319.92" stroke-width="1.8" stroke-opacity="0.9"/>
<line x1="675.00" y1="334.90" x2="691.50" y2="334.90" stroke-width="1.8" stroke-opacity="0.8"/>
<line x1="675.00" y1="337.70" x2="691.50" y2="337.70" stroke-width="1.8" stroke-opacity="0.9"/>
<line x1="675.00" y1="352.68" x2="691.50" y2="352.68" stroke-width="1.8" stroke-opacity="0.8"/>
<line x1="675.00" y1="355.48" x2="691.50" y2="355.48" stroke-width="1.8" stroke-opacity="0.9"/>
<line x1="675.00" y1="370.46" x2="691.50" y2="370.46" stroke-width="1.8" stroke-opacity="0.8"/>
<line x1="675.00" y1="373.26" x2="691.50" y2="373.26" stroke-width="1.8" stroke-opacity="0.9"/>
<line x1="675.00" y1="388.24" x2="691.50" y2="388.24" stroke-width="1.8" stroke-opacity="0.8"/>
<line x1="675.00" y1="391.04" x2="691.50" y2="391.04" stroke-width="1.8" stroke-opacity="0.9"/>
<line x1="675.00" y1="406.02" x2="691.50" y2="406.02" stroke-width="1.8" stroke-opacity="0.8"/>
<line x1="675.00" y1="408.82" x2="691.50" y2="408.82" stroke-width="1.8" stroke-opacity="0.9"/>
<line x1="675.00" y1="423.80" x2="691.50" y2="423.80" stroke-width="1.8" stroke-opacity="0.8"/>
<line x1="675.00" y1="426.60" x2="691.50" y2="426.60" stroke-width="1.8" stroke-opacity="0.9"/>
<line x1="675.00" y1="442.28" x2="693.50" y2="442.28" stroke-width="1.2"/>
<line x1="675.00" y1="440.28" x2="691.00" y2="440.28" stroke-width="1.2" stroke-opacity="0.85"/>
</g>
<g stroke="#ff00ff" fill="none">
<line x1="676.00" y1="505.60" x2="676.00" y2="612.16" stroke-width="1.6"/>
<line x1="690.80" y1="505.60" x2="690.80" y2="612.16" stroke-width="2" stroke-opacity="0.8"/>
<line x1="693.40" y1="505.60" x2="693.40" y2="612.16" stroke-width="1.2"/>
<line x1="675.00" y1="506.20" x2="693.50" y2="506.20" stroke-width="1.2"/>
<line x1="675.00" y1="508.20" x2="691.00" y2="508.20" stroke-width="1.8" stroke-opacity="0.6"/>
<line x1="675.00" y1="522.06" x2="691.50" y2="522.06" stroke-width="1.8" stroke-opacity="0.8"/>
<line x1="675.00" y1="524.86" x2="691.50" y2="524.86" stroke-width="1.8" stroke-opacity="0.9"/>
<line x1="675.00" y1="539.82" x2="691.50" y2="539.82" stroke-width="1.8" stroke-opacity="0.8"/>
<line x1="675.00" y1="542.62" x2="691.50" y2="542.62" stroke-width="1.8" stroke-opacity="0.9"/>
<line x1="675.00" y1="557.58" x2="691.50" y2="557.58" stroke-width="1.8" stroke-opacity="0.8"/>
<line x1="675.00" y1="560.38" x2="691.50" y2="560.38" stroke-width="1.8" stroke-opacity="0.9"/>
<line x1="675.00" y1="575.34" x2="691.50" y2="575.34" stroke-width="1.8" stroke-opacity="0.8"/>
<line x1="675.00" y1="578.14" x2="691.50" y2="578.14" stroke-width="1.8" stroke-opacity="0.9"/>
<line x1="675.00" y1="593.10" x2="691.50" y2="593.10" stroke-width="1.8" stroke-opacity="0.8"/>
<line x1="675.00" y1="595.90" x2="691.50" y2="595.90" stroke-width="1.8" stroke-opacity="0.9"/>
</g>
<g stroke="#ff00ff" fill="none">
<line x1="705.99" y1="-20.12" x2="705.99" y2="104.20" stroke-width="1.6"/>
<line x1="720.79" y1="-20.12" x2="720.79" y2="104.20" stroke-width="2" stroke-opacity="0.8"/>
<line x1="723.39" y1="-20.12" x2="723.39" y2="104.20" stroke-width="1.2"/>
<line x1="704.99" y1="-3.66" x2="721.49" y2="-3.66" stroke-width="1.8" stroke-opacity="0.8"/>
<line x1="704.99" y1="-0.86" x2="721.49" y2="-0.86" stroke-width="1.8" stroke-opacity="0.9"/>
<line x1="704.99" y1="14.10" x2="721.49" y2="14.10" stroke-width="1.8" stroke-opacity="0.8"/>
<line x1="704.99" y1="16.90" x2="721.49" y2="16.90" stroke-width="1.8" stroke-opacity="0.9"/>
<line x1="704.99" y1="31.86" x2="721.49" y2="31.86" stroke-width="1.8" stroke-opacity="0.8"/>
<line x1="704.99" y1="34.66" x2="721.49" y2="34.66" stroke-width="1.8" stroke-opacity="0.9"/>
<line x1="704.99" y1="49.62" x2="721.49" y2="49.62" stroke-width="1.8" stroke-opacity="0.8"/>
<line x1="704.99" y1="52.42" x2="721.49" y2="52.42" stroke-width="1.8" stroke-opacity="0.9"/>
<line x1="704.99" y1="67.38" x2="721.49" y2="67.38" stroke-width="1.8" stroke-opacity="0.8"/>
<line x1="704.99" y1="70.18" x2="721.49" y2="70.18" stroke-width="1.8" stroke-opacity="0.9"/>
<line x1="704.99" y1="85.14" x2="721.49" y2="85.14" stroke-width="1.8" stroke-opacity="0.8"/>
<line x1="704.99" y1="87.94" x2="721.49" y2="87.94" stroke-width="1.8" stroke-opacity="0.9"/>
<line x1="704.99" y1="103.60" x2="723.49" y2="103.60" stroke-width="1.2"/>
<line x1="704.99" y1="101.60" x2="720.99" y2="101.60" stroke-width="1.2" stroke-opacity="0.85"/>
</g>
<g stroke="#ff00ff" fill="none">
<line x1="705.99" y1="149.60" x2="705.99" y2="451.86" stroke-width="1.6"/>
<line x1="720.79" y1="149.60" x2="720.79" y2="451.86" stroke-width="2" stroke-opacity="0.8"/>
<line x1="723.39" y1="149.60" x2="723.39" y2="451.86" stroke-width="1.2"/>
<line x1="704.99" y1="150.20" x2="723.49" y2="150.20" stroke-width="1.2"/>
<line x1="704.99" y1="152.20" x2="720.99" y2="152.20" stroke-width="1.8" stroke-opacity="0.6"/>
<line x1="704.99" y1="166.08" x2="721.49" y2="166.08" stroke-width="1.8" stroke-opacity="0.8"/>
<line x1="704.99" y1="168.88" x2="721.49" y2="168.88" stroke-width="1.8" stroke-opacity="0.9"/>
<line x1="704.99" y1="183.86" x2="721.49" y2="183.86" stroke-width="1.8" stroke-opacity="0.8"/>
<line x1="704.99" y1="186.66" x2="721.49" y2="186.66" stroke-width="1.8" stroke-opacity="0.9"/>
<line x1="704.99" y1="201.64" x2="721.49" y2="201.64" stroke-width="1.8" stroke-opacity="0.8"/>
<line x1="704.99" y1="204.44" x2="721.49" y2="204.44" stroke-width="1.8" stroke-opacity="0.9"/>
<line x1="704.99" y1="219.42" x2="721.49" y2="219.42" stroke-width="1.8" stroke-opacity="0.8"/>
<line x1="704.99" y1="222.22" x2="721.49" y2="222.22" stroke-width="1.8" stroke-opacity="0.9"/>
<line x1="704.99" y1="237.20" x2="721.49" y2="237.20" stroke-width="1.8" stroke-opacity="0.8"/>
<line x1="704.99" y1="240.00" x2="721.49" y2="240.00" stroke-width="1.8" stroke-opacity="0.9"/>
<line x1="704.99" y1="254.98" x2="721.49" y2="254.98" stroke-width="1.8" stroke-opacity="0.8"/>
<line x1="704.99" y1="257.78" x2="721.49" y2="257.78" stroke-width="1.8" stroke-opacity="0.9"/>
<line x1="704.99" y1="272.76" x2="721.49" y2="272.76" stroke-width="1.8" stroke-opacity="0.8"/>
<line x1="704.99" y1="275.56" x2="721.49" y2="275.56" stroke-width="1.8" stroke-opacity="0.9"/>
<line x1="704.99" y1="290.54" x2="721.49" y2="290.54" stroke-width="1.8" stroke-opacity="0.8"/>
<line x1="704.99" y1="293.34" x2="721.49" y2="293.34" stroke-width="1.8" stroke-opacity="0.9"/>
<line x1="704.99" y1="308.32" x2="721.49" y2="308.32" stroke-width="1.8" stroke-opacity="0.8"/>
<line x1="704.99" y1="311.12" x2="721.49" y2="311.12" stroke-width="1.8" stroke-opacity="0.9"/>
<line x1="704.99" y1="326.10" x2="721.49" y2="326.10" stroke-width="1.8" stroke-opacity="0.8"/>
<line x1="704.99" y1="328.90" x2="721.49" y2="328.90" stroke-width="1.8" stroke-opacity="0.9"/>
<line x1="704.99" y1="343.88" x2="721.49" y2="343.88" stroke-width="1.8" stroke-opacity="0.8"/>
<line x1="704.99" y1="346.68" x2="721.49" y2="346.68" stroke-width="1.8" stroke-opacity="0.9"/>
<line x1="704.99" y1="361.66" x2="721.49" y2="361.66" stroke-width="1.8" stroke-opacity="0.8"/>
<line x1="704.99" y1="364.46" x2="721.49" y2="364.46" stroke-width="1.8" stroke-opacity="0.9"/>
<line x1="704.99" y1="379.44" x2="721.49" y2="379.44" stroke-width="1.8" stroke-opacity="0.8"/>
<line x1="704.99" y1="382.24" x2="721.49" y2="382.24" stroke-width="1.8" stroke-opacity="0.9"/>
<line x1="704.99" y1="397.22" x2="721.49" y2="397.22" stroke-width="1.8" stroke-opacity="0.8"/>
<line x1="704.99" y1="400.02" x2="721.49" y2="400.02" stroke-width="1.8" stroke-opacity="0.9"/>
<line x1="704.99" y1="415.00" x2="721.49" y2="415.00" stroke-width="1.8" stroke-opacity="0.8"/>
<line x1="704.99" y1="417.80" x2="721.49" y2="417.80" stroke-width="1.8" stroke-opacity="0.9"/>
<line x1="704.99" y1="432.78" x2="721.49" y2="432.78" stroke-width="1.8" stroke-opacity="0.8"/>
<line x1="704.99" y1="435.58" x2="721.49" y2="435.58" stroke-width="1.8" stroke-opacity="0.9"/>
<line x1="704.99" y1="451.26" x2="723.49" y2="451.26" stroke-width="1.2"/>
<line x1="704.99" y1="449.26" x2="720.99" y2="449.26" stroke-width="1.2" stroke-opacity="0.85"/>
</g>
<g stroke="#ff00ff" fill="none">
<line x1="705.99" y1="496.70" x2="705.99" y2="603.26" stroke-width="1.6"/>
<line x1="720.79" y1="496.70" x2="720.79" y2="603.26" stroke-width="2" stroke-opacity="0.8"/>
<line x1="723.39" y1="496.70" x2="723.39" y2="603.26" stroke-width="1.2"/>
<line x1="704.99" y1="497.30" x2="723.49" y2="497.30" stroke-width="1.2"/>
<line x1="704.99" y1="499.30" x2="720.99" y2="499.30" stroke-width="1.8" stroke-opacity="0.6"/>
<line x1="704.99" y1="513.16" x2="721.49" y2="513.16" stroke-width="1.8" stroke-opacity="0.8"/>
<line x1="704.99" y1="515.96" x2="721.49" y2="515.96" stroke-width="1.8" stroke-opacity="0.9"/>
<line x1="704.99" y1="530.92" x2="721.49" y2="530.92" stroke-width="1.8" stroke-opacity="0.8"/>
<line x1="704.99" y1="533.72" x2="721.49" y2="533.72" stroke-width="1.8" stroke-opacity="0.9"/>
<line x1="704.99" y1="548.68" x2="721.49" y2="548.68" stroke-width="1.8" stroke-opacity="0.8"/>
<line x1="704.99" y1="551.48" x2="721.49" y2="551.48" stroke-width="1.8" stroke-opacity="0.9"/>
<line x1="704.99" y1="566.44" x2="721.49" y2="566.44" stroke-width="1.8" stroke-opacity="0.8"/>
<line x1="704.99" y1="569.24" x2="721.49" y2="569.24" stroke-width="1.8" stroke-opacity="0.9"/>
<line x1="704.99" y1="584.20" x2="721.49" y2="584.20" stroke-width="1.8" stroke-opacity="0.8"/>
<line x1="704.99" y1="587.00" x2="721.49" y2="587.00" stroke-width="1.8" stroke-opacity="0.9"/>
<line x1="704.99" y1="602.66" x2="723.49" y2="602.66" stroke-width="1.2"/>
<line x1="704.99" y1="600.66" x2="720.99" y2="600.66" stroke-width="1.2" stroke-opacity="0.85"/>
</g>
<g stroke="#ff00ff" fill="none">
<line x1="735.98" y1="-28.82" x2="735.98" y2="95.50" stroke-width="1.6"/>
<line x1="750.78" y1="-28.82" x2="750.78" y2="95.50" stroke-width="2" stroke-opacity="0.8"/>
<line x1="753.38" y1="-28.82" x2="753.38" y2="95.50" stroke-width="1.2"/>
<line x1="734.98" y1="5.40" x2="751.48" y2="5.40" stroke-width="1.8" stroke-opacity="0.8"/>
<line x1="734.98" y1="8.20" x2="751.48" y2="8.20" stroke-width="1.8" stroke-opacity="0.9"/>
<line x1="734.98" y1="23.16" x2="751.48" y2="23.16" stroke-width="1.8" stroke-opacity="0.8"/>
<line x1="734.98" y1="25.96" x2="751.48" y2="25.96" stroke-width="1.8" stroke-opacity="0.9"/>
<line x1="734.98" y1="40.92" x2="751.48" y2="40.92" stroke-width="1.8" stroke-opacity="0.8"/>
<line x1="734.98" y1="43.72" x2="751.48" y2="43.72" stroke-width="1.8" stroke-opacity="0.9"/>
<line x1="734.98" y1="58.68" x2="751.48" y2="58.68" stroke-width="1.8" stroke-opacity="0.8"/>
<line x1="734.98" y1="61.48" x2="751.48" y2="61.48" stroke-width="1.8" stroke-opacity="0.9"/>
<line x1="734.98" y1="76.44" x2="751.48" y2="76.44" stroke-width="1.8" stroke-opacity="0.8"/>
<line x1="734.98" y1="79.24" x2="751.48" y2="79.24" stroke-width="1.8" stroke-opacity="0.9"/>
<line x1="734.98" y1="94.90" x2="753.48" y2="94.90" stroke-width="1.2"/>
<line x1="734.98" y1="92.90" x2="750.98" y2="92.90" stroke-width="1.2" stroke-opacity="0.85"/>
</g>
<g stroke="#ff00ff" fill="none">
<line x1="735.98" y1="158.40" x2="735.98" y2="442.88" stroke-width="1.6"/>
<line x1="750.78" y1="158.40" x2="750.78" y2="442.88" stroke-width="2" stroke-opacity="0.8"/>
<line x1="753.38" y1="158.40" x2="753.38" y2="442.88" stroke-width="1.2"/>
<line x1="734.98" y1="159.00" x2="753.48" y2="159.00" stroke-width="1.2"/>
<line x1="734.98" y1="161.00" x2="750.98" y2="161.00" stroke-width="1.8" stroke-opacity="0.6"/>
<line x1="734.98" y1="174.88" x2="751.48" y2="174.88" stroke-width="1.8" stroke-opacity="0.8"/>
<line x1="734.98" y1="177.68" x2="751.48" y2="177.68" stroke-width="1.8" stroke-opacity="0.9"/>
<line x1="734.98" y1="192.66" x2="751.48" y2="192.66" stroke-width="1.8" stroke-opacity="0.8"/>
<line x1="734.98" y1="195.46" x2="751.48" y2="195.46" stroke-width="1.8" stroke-opacity="0.9"/>
<line x1="734.98" y1="210.44" x2="751.48" y2="210.44" stroke-width="1.8" stroke-opacity="0.8"/>
<line x1="734.98" y1="213.24" x2="751.48" y2="213.24" stroke-width="1.8" stroke-opacity="0.9"/>
<line x1="734.98" y1="228.22" x2="751.48" y2="228.22" stroke-width="1.8" stroke-opacity="0.8"/>
<line x1="734.98" y1="231.02" x2="751.48" y2="231.02" stroke-width="1.8" stroke-opacity="0.9"/>
<line x1="734.98" y1="246.00" x2="751.48" y2="246.00" stroke-width="1.8" stroke-opacity="0.8"/>
<line x1="734.98" y1="248.80" x2="751.48" y2="248.80" stroke-width="1.8" stroke-opacity="0.9"/>
<line x1="734.98" y1="263.78" x2="751.48" y2="263.78" stroke-width="1.8" stroke-opacity="0.8"/>
<line x1="734.98" y1="266.58" x2="751.48" y2="266.58" stroke-width="1.8" stroke-opacity="0.9"/>
<line x1="734.98" y1="281.56" x2="751.48" y2="281.56" stroke-width="1.8" stroke-opacity="0.8"/>
<line x1="734.98" y1="284.36" x2="751.48" y2="284.36" stroke-width="1.8" stroke-opacity="0.9"/>
<line x1="734.98" y1="299.34" x2="751.48" y2="299.34" stroke-width="1.8" stroke-opacity="0.8"/>
<line x1="734.98" y1="302.14" x2="751.48" y2="302.14" stroke-width="1.8" stroke-opacity="0.9"/>
<line x1="734.98" y1="317.12" x2="751.48" y2="317.12" stroke-width="1.8" stroke-opacity="0.8"/>
<line x1="734.98" y1="319.92" x2="751.48" y2="319.92" stroke-width="1.8" stroke-opacity="0.9"/>
<line x1="734.98" y1="334.90" x2="751.48" y2="334.90" stroke-width="1.8" stroke-opacity="0.8"/>
<line x1="734.98" y1="337.70" x2="751.48" y2="337.70" stroke-width="1.8" stroke-opacity="0.9"/>
<line x1="734.98" y1="352.68" x2="751.48" y2="352.68" stroke-width="1.8" stroke-opacity="0.8"/>
<line x1="734.98" y1="355.48" x2="751.48" y2="355.48" stroke-width="1.8" stroke-opacity="0.9"/>
<line x1="734.98" y1="370.46" x2="751.48" y2="370.46" stroke-width="1.8" stroke-opacity="0.8"/>
<line x1="734.98" y1="373.26" x2="751.48" y2="373.26" stroke-width="1.8" stroke-opacity="0.9"/>
<line x1="734.98" y1="388.24" x2="751.48" y2="388.24" stroke-width="1.8" stroke-opacity="0.8"/>
<line x1="734.98" y1="391.04" x2="751.48" y2="391.04" stroke-width="1.8" stroke-opacity="0.9"/>
<line x1="734.98" y1="406.02" x2="751.48" y2="406.02" stroke-width="1.8" stroke-opacity="0.8"/>
<line x1="734.98" y1="408.82" x2="751.48" y2="408.82" stroke-width="1.8" stroke-opacity="0.9"/>
<line x1="734.98" y1="423.80" x2="751.48" y2="423.80" stroke-width="1.8" stroke-opacity="0.8"/>
<line x1="734.98" y1="426.60" x2="751.48" y2="426.60" stroke-width="1.8" stroke-opacity="0.9"/>
<line x1="734.98" y1="442.28" x2="753.48" y2="442.28" stroke-width="1.2"/>
<line x1="734.98" y1="440.28" x2="750.98" y2="440.28" stroke-width="1.2" stroke-opacity="0.85"/>
</g>
<g stroke="#ff00ff" fill="none">
<line x1="735.98" y1="505.60" x2="735.98" y2="612.16" stroke-width="1.6"/>
<line x1="750.78" y1="505.60" x2="750.78" y2="612.16" stroke-width="2" stroke-opacity="0.8"/>
<line x1="753.38" y1="505.60" x2="753.38" y2="612.16" stroke-width="1.2"/>
<line x1="734.98" y1="506.20" x2="753.48" y2="506.20" stroke-width="1.2"/>
<line x1="734.98" y1="508.20" x2="750.98" y2="508.20" stroke-width="1.8" stroke-opacity="0.6"/>
<line x1="734.98" y1="522.06" x2="751.48" y2="522.06" stroke-width="1.8" stroke-opacity="0.8"/>
<line x1="734.98" y1="524.86" x2="751.48" y2="524.86" stroke-width="1.8" stroke-opacity="0.9"/>
<line x1="734.98" y1="539.82" x2="751.48" y2="539.82" stroke-width="1.8" stroke-opacity="0.8"/>
<line x1="734.98" y1="542.62" x2="751.48" y2="542.62" stroke-width="1.8" stroke-opacity="0.9"/>
<line x1="734.98" y1="557.58" x2="751.48" y2="557.58" stroke-width="1.8" stroke-opacity="0.8"/>
<line x1="734.98" y1="560.38" x2="751.48" y2="560.38" stroke-width="1.8" stroke-opacity="0.9"/>
<line x1="734.98" y1="575.34" x2="751.48" y2="575.34" stroke-width="1.8" stroke-opacity="0.8"/>
<line x1="734.98" y1="578.14" x2="751.48" y2="578.14" stroke-width="1.8" stroke-opacity="0.9"/>
<line x1="734.98" y1="593.10" x2="751.48" y2="593.10" stroke-width="1.8" stroke-opacity="0.8"/>
<line x1="734.98" y1="595.90" x2="751.48" y2="595.90" stroke-width="1.8" stroke-opacity="0.9"/>
</g>
<g stroke="#ff00ff" fill="none">
<line x1="765.97" y1="-20.12" x2="765.97" y2="104.20" stroke-width="1.6"/>
<line x1="780.77" y1="-20.12" x2="780.77" y2="104.20" stroke-width="2" stroke-opacity="0.8"/>
<line x1="783.37" y1="-20.12" x2="783.37" y2="104.20" stroke-width="1.2"/>
<line x1="764.97" y1="-3.66" x2="781.47" y2="-3.66" stroke-width="1.8" stroke-opacity="0.8"/>
<line x1="764.97" y1="-0.86" x2="781.47" y2="-0.86" stroke-width="1.8" stroke-opacity="0.9"/>
<line x1="764.97" y1="14.10" x2="781.47" y2="14.10" stroke-width="1.8" stroke-opacity="0.8"/>
<line x1="764.97" y1="16.90" x2="781.47" y2="16.90" stroke-width="1.8" stroke-opacity="0.9"/>
<line x1="764.97" y1="31.86" x2="781.47" y2="31.86" stroke-width="1.8" stroke-opacity="0.8"/>
<line x1="764.97" y1="34.66" x2="781.47" y2="34.66" stroke-width="1.8" stroke-opacity="0.9"/>
<line x1="764.97" y1="49.62" x2="781.47" y2="49.62" stroke-width="1.8" stroke-opacity="0.8"/>
<line x1="764.97" y1="52.42" x2="781.47" y2="52.42" stroke-width="1.8" stroke-opacity="0.9"/>
<line x1="764.97" y1="67.38" x2="781.47" y2="67.38" stroke-width="1.8" stroke-opacity="0.8"/>
<line x1="764.97" y1="70.18" x2="781.47" y2="70.18" stroke-width="1.8" stroke-opacity="0.9"/>
<line x1="764.97" y1="85.14" x2="781.47" y2="85.14" stroke-width="1.8" stroke-opacity="0.8"/>
<line x1="764.97" y1="87.94" x2="781.47" y2="87.94" stroke-width="1.8" stroke-opacity="0.9"/>
<line x1="764.97" y1="103.60" x2="783.47" y2="103.60" stroke-width="1.2"/>
<line x1="764.97" y1="101.60" x2="780.97" y2="101.60" stroke-width="1.2" stroke-opacity="0.85"/>
</g>
<g stroke="#ff00ff" fill="none">
<line x1="765.97" y1="149.60" x2="765.97" y2="451.86" stroke-width="1.6"/>
<line x1="780.77" y1="149.60" x2="780.77" y2="451.86" stroke-width="2" stroke-opacity="0.8"/>
<line x1="783.37" y1="149.60" x2="783.37" y2="451.86" stroke-width="1.2"/>
<line x1="764.97" y1="150.20" x2="783.47" y2="150.20" stroke-width="1.2"/>
<line x1="764.97" y1="152.20" x2="780.97" y2="152.20" stroke-width="1.8" stroke-opacity="0.6"/>
<line x1="764.97" y1="166.08" x2="781.47" y2="166.08" stroke-width="1.8" stroke-opacity="0.8"/>
<line x1="764.97" y1="168.88" x2="781.47" y2="168.88" stroke-width="1.8" stroke-opacity="0.9"/>
<line x1="764.97" y1="183.86" x2="781.47" y2="183.86" stroke-width="1.8" stroke-opacity="0.8"/>
<line x1="764.97" y1="186.66" x2="781.47" y2="186.66" stroke-width="1.8" stroke-opacity="0.9"/>
<line x1="764.97" y1="201.64" x2="781.47" y2="201.64" stroke-width="1.8" stroke-opacity="0.8"/>
<line x1="764.97" y1="204.44" x2="781.47" y2="204.44" stroke-width="1.8" stroke-opacity="0.9"/>
<line x1="764.97" y1="219.42" x2="781.47" y2="219.42" stroke-width="1.8" stroke-opacity="0.8"/>
<line x1="764.97" y1="222.22" x2="781.47" y2="222.22" stroke-width="1.8" stroke-opacity="0.9"/>
<line x1="764.97" y1="237.20" x2="781.47" y2="237.20" stroke-width="1.8" stroke-opacity="0.8"/>
<line x1="764.97" y1="240.00" x2="781.47" y2="240.00" stroke-width="1.8" stroke-opacity="0.9"/>
<line x1="764.97" y1="254.98" x2="781.47" y2="254.98" stroke-width="1.8" stroke-opacity="0.8"/>
<line x1="764.97" y1="257.78" x2="781.47" y2="257.78" stroke-width="1.8" stroke-opacity="0.9"/>
<line x1="764.97" y1="272.76" x2="781.47" y2="272.76" stroke-width="1.8" stroke-opacity="0.8"/>
<line x1="764.97" y1="275.56" x2="781.47" y2="275.56" stroke-width="1.8" stroke-opacity="0.9"/>
<line x1="764.97" y1="290.54" x2="781.47" y2="290.54" stroke-width="1.8" stroke-opacity="0.8"/>
<line x1="764.97" y1="293.34" x2="781.47" y2="293.34" stroke-width="1.8" stroke-opacity="0.9"/>
<line x1="764.97" y1="308.32" x2="781.47" y2="308.32" stroke-width="1.8" stroke-opacity="0.8"/>
<line x1="764.97" y1="311.12" x2="781.47" y2="311.12" stroke-width="1.8" stroke-opacity="0.9"/>
<line x1="764.97" y1="326.10" x2="781.47" y2="326.10" stroke-width="1.8" stroke-opacity="0.8"/>
<line x1="764.97" y1="328.90" x2="781.47" y2="328.90" stroke-width="1.8" stroke-opacity="0.9"/>
<line x1="764.97" y1="343.88" x2="781.47" y2="343.88" stroke-width="1.8" stroke-opacity="0.8"/>
<line x1="764.97" y1="346.68" x2="781.47" y2="346.68" stroke-width="1.8" stroke-opacity="0.9"/>
<line x1="764.97" y1="361.66" x2="781.47" y2="361.66" stroke-width="1.8" stroke-opacity="0.8"/>
<line x1="764.97" y1="364.46" x2="781.47" y2="364.46" stroke-width="1.8" stroke-opacity="0.9"/>
<line x1="764.97" y1="379.44" x2="781.47" y2="379.44" stroke-width="1.8" stroke-opacity="0.8"/>
<line x1="764.97" y1="382.24" x2="781.47" y2="382.24" stroke-width="1.8" stroke-opacity="0.9"/>
<line x1="764.97" y1="397.22" x2="781.47" y2="397.22" stroke-width="1.8" stroke-opacity="0.8"/>
<line x1="764.97" y1="400.02" x2="781.47" y2="400.02" stroke-width="1.8" stroke-opacity="0.9"/>
<line x1="764.97" y1="415.00" x2="781.47" y2="415.00" stroke-width="1.8" stroke-opacity="0.8"/>
<line x1="764.97" y1="417.80" x2="781.47" y2="417.80" stroke-width="1.8" stroke-opacity="0.9"/>
<line x1="764.97" y1="432.78" x2="781.47" y2="432.78" stroke-width="1.8" stroke-opacity="0.8"/>
<line x1="764.97" y1="435.58" x2="781.47" y2="435.58" stroke-width="1.8" stroke-opacity="0.9"/>
<line x1="764.97" y1="451.26" x2="783.47" y2="451.26" stroke-width="1.2"/>
<line x1="764.97" y1="449.26" x2="780.97" y2="449.26" stroke-width="1.2" stroke-opacity="0.85"/>
</g>
<g stroke="#ff00ff" fill="none">
<line x1="765.97" y1="496.70" x2="765.97" y2="603.26" stroke-width="1.6"/>
<line x1="780.77" y1="496.70" x2="780.77" y2="603.26" stroke-width="2" stroke-opacity="0.8"/>
<line x1="783.37" y1="496.70" x2="783.37" y2="603.26" stroke-width="1.2"/>
<line x1="764.97" y1="497.30" x2="783.47" y2="497.30" stroke-width="1.2"/>
<line x1="764.97" y1="499.30" x2="780.97" y2="499.30" stroke-width="1.8" stroke-opacity="0.6"/>
<line x1="764.97" y1="513.16" x2="781.47" y2="513.16" stroke-width="1.8" stroke-opacity="0.8"/>
<line x1="764.97" y1="515.96" x2="781.47" y2="515.96" stroke-width="1.8" stroke-opacity="0.9"/>
<line x1="764.97" y1="530.92" x2="781.47" y2="530.92" stroke-width="1.8" stroke-opacity="0.8"/>
<line x1="764.97" y1="533.72" x2="781.47" y2="533.72" stroke-width="1.8" stroke-opacity="0.9"/>
<line x1="764.97" y1="548.68" x2="781.47" y2="548.68" stroke-width="1.8" stroke-opacity="0.8"/>
<line x1="764.97" y1="551.48" x2="781.47" y2="551.48" stroke-width="1.8" stroke-opacity="0.9"/>
<line x1="764.97" y1="566.44" x2="781.47" y2="566.44" stroke-width="1.8" stroke-opacity="0.8"/>
<line x1="764.97" y1="569.24" x2="781.47" y2="569.24" stroke-width="1.8" stroke-opacity="0.9"/>
<line x1="764.97" y1="584.20" x2="781.47" y2="584.20" stroke-width="1.8" stroke-opacity="0.8"/>
<line x1="764.97" y1="587.00" x2="781.47" y2="587.00" stroke-width="1.8" stroke-opacity="0.9"/>
<line x1="764.97" y1="602.66" x2="783.47" y2="602.66" stroke-width="1.2"/>
<line x1="764.97" y1="600.66" x2="780.97" y2="600.66" stroke-width="1.2" stroke-opacity="0.85"/>
</g>
<line x1="504.40" y1="106.00" x2="504.40" y2="495.00" stroke="#dd0000" stroke-width="1.4" />
<rect x="497.6" y="117.50" width="14.2" height="12.8" fill="#ffffff"/>
<rect x="502.9" y="116.00" width="3.2" height="16.6" fill="#ffffff"/>
<rect x="496.6" y="121.80" width="3" height="4.6" fill="#a0a0a0"/>
<rect x="509.4" y="121.80" width="1.8" height="4.6" fill="#a0a0a0"/>
<rect x="496.6" y="119.80" width="1.6" height="2" fill="#9a9a9a"/>
<rect x="496.6" y="126.60" width="1.6" height="2" fill="#9a9a9a"/>
<path d="M491.6,117.80000000000001 H489.4 V131.0 H491.6 M490.6,119.80000000000001 Q496,119.80000000000001 496,122.4 V126.4 Q496,129.0 490.6,129.0 M490.4,124.10000000000001 H496" stroke="#e8e8e8" stroke-width="1.2" fill="none" />
<line x1="489.50" y1="131.20" x2="493.00" y2="128.60" stroke="#e8e8e8" stroke-width="1.2" />
<rect x="497.6" y="152.80" width="14.2" height="12.8" fill="#ffffff"/>
<rect x="502.9" y="151.30" width="3.2" height="16.6" fill="#ffffff"/>
<rect x="496.6" y="157.10" width="3" height="4.6" fill="#e070e0"/>
<rect x="509.4" y="157.10" width="1.8" height="4.6" fill="#e070e0"/>
<rect x="496.6" y="155.10" width="1.6" height="2" fill="#9a9a9a"/>
<rect x="496.6" y="161.90" width="1.6" height="2" fill="#9a9a9a"/>
<path d="M491.6,153.1 H489.4 V166.29999999999998 H491.6 M490.6,155.1 Q496,155.1 496,157.7 V161.7 Q496,164.29999999999998 490.6,164.29999999999998 M490.4,159.39999999999998 H496" stroke="#e8e8e8" stroke-width="1.2" fill="none" />
<line x1="489.50" y1="166.50" x2="493.00" y2="163.90" stroke="#e8e8e8" stroke-width="1.2" />
<rect x="497.6" y="188.10" width="14.2" height="12.8" fill="#ffffff"/>
<rect x="502.9" y="186.60" width="3.2" height="16.6" fill="#ffffff"/>
<rect x="496.6" y="192.40" width="3" height="4.6" fill="#e070e0"/>
<rect x="509.4" y="192.40" width="1.8" height="4.6" fill="#e070e0"/>
<rect x="496.6" y="190.40" width="1.6" height="2" fill="#9a9a9a"/>
<rect x="496.6" y="197.20" width="1.6" height="2" fill="#9a9a9a"/>
<path d="M491.6,188.4 H489.4 V201.6 H491.6 M490.6,190.4 Q496,190.4 496,193.0 V197.0 Q496,199.6 490.6,199.6 M490.4,194.7 H496" stroke="#e8e8e8" stroke-width="1.2" fill="none" />
<line x1="489.50" y1="201.80" x2="493.00" y2="199.20" stroke="#e8e8e8" stroke-width="1.2" />
<rect x="497.6" y="223.40" width="14.2" height="12.8" fill="#ffffff"/>
<rect x="502.9" y="221.90" width="3.2" height="16.6" fill="#ffffff"/>
<rect x="496.6" y="227.70" width="3" height="4.6" fill="#e070e0"/>
<rect x="509.4" y="227.70" width="1.8" height="4.6" fill="#e070e0"/>
<rect x="496.6" y="225.70" width="1.6" height="2" fill="#9a9a9a"/>
<rect x="496.6" y="232.50" width="1.6" height="2" fill="#9a9a9a"/>
<path d="M491.6,223.70000000000002 H489.4 V236.9 H491.6 M490.6,225.70000000000002 Q496,225.70000000000002 496,228.3 V232.3 Q496,234.9 490.6,234.9 M490.4,230.0 H496" stroke="#e8e8e8" stroke-width="1.2" fill="none" />
<line x1="489.50" y1="237.10" x2="493.00" y2="234.50" stroke="#e8e8e8" stroke-width="1.2" />
<rect x="497.6" y="258.70" width="14.2" height="12.8" fill="#ffffff"/>
<rect x="502.9" y="257.20" width="3.2" height="16.6" fill="#ffffff"/>
<rect x="496.6" y="263.00" width="3" height="4.6" fill="#e070e0"/>
<rect x="509.4" y="263.00" width="1.8" height="4.6" fill="#e070e0"/>
<rect x="496.6" y="261.00" width="1.6" height="2" fill="#9a9a9a"/>
<rect x="496.6" y="267.80" width="1.6" height="2" fill="#9a9a9a"/>
<path d="M491.6,259.0 H489.4 V272.20000000000005 H491.6 M490.6,261.0 Q496,261.0 496,263.6 V267.6 Q496,270.20000000000005 490.6,270.20000000000005 M490.4,265.3 H496" stroke="#e8e8e8" stroke-width="1.2" fill="none" />
<line x1="489.50" y1="272.40" x2="493.00" y2="269.80" stroke="#e8e8e8" stroke-width="1.2" />
<rect x="497.6" y="294.00" width="14.2" height="12.8" fill="#ffffff"/>
<rect x="502.9" y="292.50" width="3.2" height="16.6" fill="#ffffff"/>
<rect x="496.6" y="298.30" width="3" height="4.6" fill="#e070e0"/>
<rect x="509.4" y="298.30" width="1.8" height="4.6" fill="#e070e0"/>
<rect x="496.6" y="296.30" width="1.6" height="2" fill="#9a9a9a"/>
<rect x="496.6" y="303.10" width="1.6" height="2" fill="#9a9a9a"/>
<path d="M491.6,294.29999999999995 H489.4 V307.5 H491.6 M490.6,296.29999999999995 Q496,296.29999999999995 496,298.9 V302.9 Q496,305.5 490.6,305.5 M490.4,300.59999999999997 H496" stroke="#e8e8e8" stroke-width="1.2" fill="none" />
<line x1="489.50" y1="307.70" x2="493.00" y2="305.10" stroke="#e8e8e8" stroke-width="1.2" />
<rect x="497.6" y="329.30" width="14.2" height="12.8" fill="#ffffff"/>
<rect x="502.9" y="327.80" width="3.2" height="16.6" fill="#ffffff"/>
<rect x="496.6" y="333.60" width="3" height="4.6" fill="#e070e0"/>
<rect x="509.4" y="333.60" width="1.8" height="4.6" fill="#e070e0"/>
<rect x="496.6" y="331.60" width="1.6" height="2" fill="#9a9a9a"/>
<rect x="496.6" y="338.40" width="1.6" height="2" fill="#9a9a9a"/>
<path d="M491.6,329.59999999999997 H489.4 V342.8 H491.6 M490.6,331.59999999999997 Q496,331.59999999999997 496,334.2 V338.2 Q496,340.8 490.6,340.8 M490.4,335.9 H496" stroke="#e8e8e8" stroke-width="1.2" fill="none" />
<line x1="489.50" y1="343.00" x2="493.00" y2="340.40" stroke="#e8e8e8" stroke-width="1.2" />
<rect x="497.6" y="364.60" width="14.2" height="12.8" fill="#ffffff"/>
<rect x="502.9" y="363.10" width="3.2" height="16.6" fill="#ffffff"/>
<rect x="496.6" y="368.90" width="3" height="4.6" fill="#e070e0"/>
<rect x="509.4" y="368.90" width="1.8" height="4.6" fill="#e070e0"/>
<rect x="496.6" y="366.90" width="1.6" height="2" fill="#9a9a9a"/>
<rect x="496.6" y="373.70" width="1.6" height="2" fill="#9a9a9a"/>
<path d="M491.6,364.9 H489.4 V378.1 H491.6 M490.6,366.9 Q496,366.9 496,369.5 V373.5 Q496,376.1 490.6,376.1 M490.4,371.2 H496" stroke="#e8e8e8" stroke-width="1.2" fill="none" />
<line x1="489.50" y1="378.30" x2="493.00" y2="375.70" stroke="#e8e8e8" stroke-width="1.2" />
<rect x="497.6" y="399.90" width="14.2" height="12.8" fill="#ffffff"/>
<rect x="502.9" y="398.40" width="3.2" height="16.6" fill="#ffffff"/>
<rect x="496.6" y="404.20" width="3" height="4.6" fill="#e070e0"/>
<rect x="509.4" y="404.20" width="1.8" height="4.6" fill="#e070e0"/>
<rect x="496.6" y="402.20" width="1.6" height="2" fill="#9a9a9a"/>
<rect x="496.6" y="409.00" width="1.6" height="2" fill="#9a9a9a"/>
<path d="M491.6,400.19999999999993 H489.4 V413.4 H491.6 M490.6,402.19999999999993 Q496,402.19999999999993 496,404.79999999999995 V408.79999999999995 Q496,411.4 490.6,411.4 M490.4,406.49999999999994 H496" stroke="#e8e8e8" stroke-width="1.2" fill="none" />
<line x1="489.50" y1="413.60" x2="493.00" y2="411.00" stroke="#e8e8e8" stroke-width="1.2" />
<rect x="497.6" y="435.20" width="14.2" height="12.8" fill="#ffffff"/>
<rect x="502.9" y="433.70" width="3.2" height="16.6" fill="#ffffff"/>
<rect x="496.6" y="439.50" width="3" height="4.6" fill="#e070e0"/>
<rect x="509.4" y="439.50" width="1.8" height="4.6" fill="#e070e0"/>
<rect x="496.6" y="437.50" width="1.6" height="2" fill="#9a9a9a"/>
<rect x="496.6" y="444.30" width="1.6" height="2" fill="#9a9a9a"/>
<path d="M491.6,435.5 H489.4 V448.70000000000005 H491.6 M490.6,437.5 Q496,437.5 496,440.1 V444.1 Q496,446.70000000000005 490.6,446.70000000000005 M490.4,441.8 H496" stroke="#e8e8e8" stroke-width="1.2" fill="none" />
<line x1="489.50" y1="448.90" x2="493.00" y2="446.30" stroke="#e8e8e8" stroke-width="1.2" />
<rect x="497.6" y="470.50" width="14.2" height="12.8" fill="#ffffff"/>
<rect x="502.9" y="469.00" width="3.2" height="16.6" fill="#ffffff"/>
<rect x="496.6" y="474.80" width="3" height="4.6" fill="#a0a0a0"/>
<rect x="509.4" y="474.80" width="1.8" height="4.6" fill="#a0a0a0"/>
<rect x="496.6" y="472.80" width="1.6" height="2" fill="#9a9a9a"/>
<rect x="496.6" y="479.60" width="1.6" height="2" fill="#9a9a9a"/>
<path d="M491.6,470.79999999999995 H489.4 V484.0 H491.6 M490.6,472.79999999999995 Q496,472.79999999999995 496,475.4 V479.4 Q496,482.0 490.6,482.0 M490.4,477.09999999999997 H496" stroke="#e8e8e8" stroke-width="1.2" fill="none" />
<line x1="489.50" y1="484.20" x2="493.00" y2="481.60" stroke="#e8e8e8" stroke-width="1.2" />
<line x1="375.00" y1="0.50" x2="384.00" y2="0.50" stroke="#ff00ff" stroke-width="1.2" />
<line x1="384.00" y1="0.60" x2="459.30" y2="0.60" stroke="#ffff00" stroke-width="1.4" />
<rect x="350.60" y="158.60" width="14.80" height="284.20" stroke="#cfcfcf" stroke-width="1.2" fill="none" />
<line x1="140.20" y1="110.50" x2="193.30" y2="110.50" stroke="#e6e6e6" stroke-width="1.1" />
<line x1="140.20" y1="100.00" x2="140.20" y2="112.00" stroke="#e6e6e6" stroke-width="1.1" />
<line x1="193.30" y1="100.00" x2="193.30" y2="112.00" stroke="#e6e6e6" stroke-width="1.1" />
<line x1="119.50" y1="123.50" x2="119.50" y2="477.40" stroke="#e6e6e6" stroke-width="1.1" />
<line x1="110.00" y1="123.80" x2="129.80" y2="123.80" stroke="#c8c8c8" stroke-width="1.2" />
<line x1="110.50" y1="477.40" x2="129.30" y2="477.40" stroke="#e6e6e6" stroke-width="1.1" />
<line x1="275.60" y1="395.00" x2="275.60" y2="448.00" stroke="#e6e6e6" stroke-width="1.1" />
<line x1="265.00" y1="395.00" x2="284.50" y2="395.00" stroke="#e6e6e6" stroke-width="1.1" />
<line x1="265.00" y1="448.00" x2="284.50" y2="448.00" stroke="#e6e6e6" stroke-width="1.1" />
<line x1="291.80" y1="101.00" x2="504.40" y2="101.00" stroke="#d8d8d8" stroke-width="1.3" />
<line x1="291.80" y1="91.00" x2="291.80" y2="96.00" stroke="#e6e6e6" stroke-width="1.1" />
<line x1="291.80" y1="105.50" x2="291.80" y2="107.00" stroke="#e6e6e6" stroke-width="1.1" />
<line x1="504.40" y1="91.50" x2="504.40" y2="96.00" stroke="#e6e6e6" stroke-width="1.1" />
<line x1="289.50" y1="103.00" x2="294.00" y2="99.00" stroke="#e6e6e6" stroke-width="1.6" />
<line x1="502.00" y1="103.00" x2="506.50" y2="98.50" stroke="#e6e6e6" stroke-width="1.6" />
<line x1="482.50" y1="121.50" x2="482.50" y2="159.60" stroke="#e6e6e6" stroke-width="1.1" />
<line x1="473.40" y1="123.80" x2="485.40" y2="123.80" stroke="#e6e6e6" stroke-width="1.1" />
<line x1="473.40" y1="159.80" x2="485.40" y2="159.80" stroke="#e6e6e6" stroke-width="1.1" />
<path d="M137.60,113.10 L140.40,110.30 L141.00,111.10 L142.80,107.90" fill="none" stroke="#e6e6e6" stroke-width="1.5" stroke-linejoin="round"/>
<path d="M190.70,113.10 L193.50,110.30 L194.10,111.10 L195.90,107.90" fill="none" stroke="#e6e6e6" stroke-width="1.5" stroke-linejoin="round"/>
<path d="M117.10,121.20 L119.70,124.10 L120.30,123.20 L122.30,126.40" fill="none" stroke="#e6e6e6" stroke-width="1.5" stroke-linejoin="round"/>
<path d="M117.10,474.80 L119.70,477.70 L120.30,476.80 L122.30,480.00" fill="none" stroke="#e6e6e6" stroke-width="1.5" stroke-linejoin="round"/>
<path d="M273.40,392.20 L276.00,395.10 L276.60,394.20 L278.60,397.40" fill="none" stroke="#e6e6e6" stroke-width="1.5" stroke-linejoin="round"/>
<path d="M273.40,445.50 L276.00,448.40 L276.60,447.50 L278.60,450.70" fill="none" stroke="#e6e6e6" stroke-width="1.5" stroke-linejoin="round"/>
<path d="M480.10,121.20 L482.70,124.10 L483.30,123.20 L485.30,126.40" fill="none" stroke="#e6e6e6" stroke-width="1.5" stroke-linejoin="round"/>
<path d="M480.10,157.20 L482.70,160.10 L483.30,159.20 L485.30,162.40" fill="none" stroke="#e6e6e6" stroke-width="1.5" stroke-linejoin="round"/>
<path d="M292.6,204.4 L362.3,204.4 M292.6,204.4 L309.3,221 L324.6,204.4" stroke="#00c000" stroke-width="1.2" fill="none" />
<path d="M253.1,287.7 L321.6,287.7 M253.1,287.7 L268.7,304 L284.6,287.7" stroke="#00c000" stroke-width="1.2" fill="none" />
<g transform="translate(155.20,95.00)" fill="none" stroke="#dadada" stroke-width="1.1" stroke-linecap="round" stroke-linejoin="round"><g style="vector-effect:non-scaling-stroke"><path vector-effect="non-scaling-stroke" transform="translate(0.00,0) scale(0.9333,0.9700)" d="M0.6,1.6 L2,0 V10"/><path vector-effect="non-scaling-stroke" transform="translate(3.80,0) scale(0.9333,0.9700)" d="M5.5,0 H1 L0.5,4.5 C1.2,3.9 2.2,3.6 3,3.6 C4.8,3.6 6,4.8 6,6.8 C6,8.7 4.8,10 3,10 C1.8,10 0.8,9.5 0.2,8.7"/><path vector-effect="non-scaling-stroke" transform="translate(12.10,0) scale(0.9333,0.9700)" d="M3,0 C1,0 0,2 0,5 C0,8 1,10 3,10 C5,10 6,8 6,5 C6,2 5,0 3,0 Z"/><path vector-effect="non-scaling-stroke" transform="translate(19.10,0) scale(0.9333,0.9700)" d="M3,0 C1,0 0,2 0,5 C0,8 1,10 3,10 C5,10 6,8 6,5 C6,2 5,0 3,0 Z"/></g></g>
<g transform="translate(385.00,84.90)" fill="none" stroke="#dadada" stroke-width="1.1" stroke-linecap="round" stroke-linejoin="round"><g style="vector-effect:non-scaling-stroke"><path vector-effect="non-scaling-stroke" transform="translate(0.00,0) scale(0.9333,1.0900)" d="M5.5,1 C5,0.3 4,0 3,0 C1,0 0,2 0,5 C0,8 1,10 3,10 C4.8,10 6,8.8 6,7 C6,5.2 4.8,4 3,4 C1.4,4 0.3,5 0,6.5"/><path vector-effect="non-scaling-stroke" transform="translate(7.30,0) scale(0.9333,1.0900)" d="M3,0 C1,0 0,2 0,5 C0,8 1,10 3,10 C5,10 6,8 6,5 C6,2 5,0 3,0 Z"/><path vector-effect="non-scaling-stroke" transform="translate(14.60,0) scale(0.9333,1.0900)" d="M3,0 C1,0 0,2 0,5 C0,8 1,10 3,10 C5,10 6,8 6,5 C6,2 5,0 3,0 Z"/><path vector-effect="non-scaling-stroke" transform="translate(21.90,0) scale(0.9333,1.0900)" d="M3,0 C1,0 0,2 0,5 C0,8 1,10 3,10 C5,10 6,8 6,5 C6,2 5,0 3,0 Z"/></g></g>
<g transform="translate(308.40,189.20)" fill="none" stroke="#dadada" stroke-width="1.3" stroke-linecap="round" stroke-linejoin="round"><g style="vector-effect:non-scaling-stroke"><path vector-effect="non-scaling-stroke" transform="translate(0.00,0) scale(1.7000,1.3600)" d="M3,0 C1,0 0,2 0,5 C0,8 1,10 3,10 C5,10 6,8 6,5 C6,2 5,0 3,0 Z"/><path vector-effect="non-scaling-stroke" transform="translate(12.20,0) scale(1.7000,1.3600)" d="M2.5,9.2 L3.5,9.2 L3.5,10 L2.5,10 Z"/><path vector-effect="non-scaling-stroke" transform="translate(19.00,0) scale(1.7000,1.3600)" d="M3,0 C1,0 0,2 0,5 C0,8 1,10 3,10 C5,10 6,8 6,5 C6,2 5,0 3,0 Z"/><path vector-effect="non-scaling-stroke" transform="translate(31.20,0) scale(1.7000,1.3600)" d="M3,0 C1,0 0,2 0,5 C0,8 1,10 3,10 C5,10 6,8 6,5 C6,2 5,0 3,0 Z"/><path vector-effect="non-scaling-stroke" transform="translate(43.40,0) scale(1.7000,1.3600)" d="M3,0 C1,0 0,2 0,5 C0,8 1,10 3,10 C5,10 6,8 6,5 C6,2 5,0 3,0 Z"/></g></g>
<g transform="translate(268.90,272.20)" fill="none" stroke="#dadada" stroke-width="1.3" stroke-linecap="round" stroke-linejoin="round"><g style="vector-effect:non-scaling-stroke"><path vector-effect="non-scaling-stroke" transform="translate(0.00,0) scale(1.7000,1.3400)" d="M3,0 C1,0 0,2 0,5 C0,8 1,10 3,10 C5,10 6,8 6,5 C6,2 5,0 3,0 Z"/><path vector-effect="non-scaling-stroke" transform="translate(12.20,0) scale(1.7000,1.3400)" d="M2.5,9.2 L3.5,9.2 L3.5,10 L2.5,10 Z"/><path vector-effect="non-scaling-stroke" transform="translate(19.00,0) scale(1.7000,1.3400)" d="M6,3.5 C5.7,5 4.6,6 3,6 C1.2,6 0,4.8 0,3 C0,1.2 1.2,0 3,0 C5,0 6,2 6,5 C6,8 5,10 3,10 C2,10 1,9.7 0.5,9"/><path vector-effect="non-scaling-stroke" transform="translate(31.20,0) scale(1.7000,1.3400)" d="M3,0 C1,0 0,2 0,5 C0,8 1,10 3,10 C5,10 6,8 6,5 C6,2 5,0 3,0 Z"/><path vector-effect="non-scaling-stroke" transform="translate(43.40,0) scale(1.7000,1.3400)" d="M3,0 C1,0 0,2 0,5 C0,8 1,10 3,10 C5,10 6,8 6,5 C6,2 5,0 3,0 Z"/></g></g>
<g transform="translate(309.80,314.80)" fill="none" stroke="#dadada" stroke-width="1.1" stroke-linecap="round" stroke-linejoin="round"><g style="vector-effect:non-scaling-stroke"><path vector-effect="non-scaling-stroke" transform="translate(0.00,0) scale(1.1667,1.0000)" d="M4.5,0 C2,2 1.5,4 1.5,5 C1.5,6 2,8 4.5,10"/><path vector-effect="non-scaling-stroke" transform="translate(5.80,0) scale(1.1667,1.0000)" d="M0.5,1.2 C1,0.4 2,0 3,0 C4.5,0 5.5,1 5.5,2.5 C5.5,4 4.4,4.8 2.6,4.8 C4.6,4.8 6,5.8 6,7.3 C6,9 4.6,10 3,10 C1.8,10 0.8,9.5 0.2,8.7"/><path vector-effect="non-scaling-stroke" transform="translate(15.00,0) scale(1.1667,1.0000)" d="M6,3.5 C5.7,5 4.6,6 3,6 C1.2,6 0,4.8 0,3 C0,1.2 1.2,0 3,0 C5,0 6,2 6,5 C6,8 5,10 3,10 C2,10 1,9.7 0.5,9"/><path vector-effect="non-scaling-stroke" transform="translate(25.70,0) scale(1.1667,1.0000)" d="M6,3.5 C5.7,5 4.6,6 3,6 C1.2,6 0,4.8 0,3 C0,1.2 1.2,0 3,0 C5,0 6,2 6,5 C6,8 5,10 3,10 C2,10 1,9.7 0.5,9"/></g></g>
<g transform="translate(352.50,314.80)" fill="none" stroke="#dadada" stroke-width="1.1" stroke-linecap="round" stroke-linejoin="round"><g style="vector-effect:non-scaling-stroke"><path vector-effect="non-scaling-stroke" transform="translate(0.00,0) scale(1.1667,1.0000)" d="M1.5,0 C4,2 4.5,4 4.5,5 C4.5,6 4,8 1.5,10"/></g></g>
<g transform="translate(104.40,317.20) rotate(-90)" fill="none" stroke="#dadada" stroke-width="1.1" stroke-linecap="round" stroke-linejoin="round"><g style="vector-effect:non-scaling-stroke"><path vector-effect="non-scaling-stroke" transform="translate(0.00,0) scale(0.7333,1.0800)" d="M0.6,1.6 L2,0 V10"/><path vector-effect="non-scaling-stroke" transform="translate(5.40,0) scale(0.7333,1.0800)" d="M3,0 C1,0 0,2 0,5 C0,8 1,10 3,10 C5,10 6,8 6,5 C6,2 5,0 3,0 Z"/><path vector-effect="non-scaling-stroke" transform="translate(12.80,0) scale(0.7333,1.0800)" d="M3,0 C1,0 0,2 0,5 C0,8 1,10 3,10 C5,10 6,8 6,5 C6,2 5,0 3,0 Z"/><path vector-effect="non-scaling-stroke" transform="translate(20.20,0) scale(0.7333,1.0800)" d="M3,0 C1,0 0,2 0,5 C0,8 1,10 3,10 C5,10 6,8 6,5 C6,2 5,0 3,0 Z"/><path vector-effect="non-scaling-stroke" transform="translate(27.50,0) scale(0.7333,1.0800)" d="M3,0 C1,0 0,2 0,5 C0,8 1,10 3,10 C5,10 6,8 6,5 C6,2 5,0 3,0 Z"/></g></g>
<g transform="translate(259.80,434.80) rotate(-90)" fill="none" stroke="#dadada" stroke-width="1.1" stroke-linecap="round" stroke-linejoin="round"><g style="vector-effect:non-scaling-stroke"><path vector-effect="non-scaling-stroke" transform="translate(0.00,0) scale(0.8667,1.0000)" d="M0.6,1.6 L2,0 V10"/><path vector-effect="non-scaling-stroke" transform="translate(5.20,0) scale(0.8667,1.0000)" d="M5.5,0 H1 L0.5,4.5 C1.2,3.9 2.2,3.6 3,3.6 C4.8,3.6 6,4.8 6,6.8 C6,8.7 4.8,10 3,10 C1.8,10 0.8,9.5 0.2,8.7"/><path vector-effect="non-scaling-stroke" transform="translate(12.20,0) scale(0.8667,1.0000)" d="M3,0 C1,0 0,2 0,5 C0,8 1,10 3,10 C5,10 6,8 6,5 C6,2 5,0 3,0 Z"/><path vector-effect="non-scaling-stroke" transform="translate(19.00,0) scale(0.8667,1.0000)" d="M3,0 C1,0 0,2 0,5 C0,8 1,10 3,10 C5,10 6,8 6,5 C6,2 5,0 3,0 Z"/></g></g>
<g transform="translate(468.20,153.30) rotate(-90)" fill="none" stroke="#dadada" stroke-width="1.1" stroke-linecap="round" stroke-linejoin="round"><g style="vector-effect:non-scaling-stroke"><path vector-effect="non-scaling-stroke" transform="translate(0.00,0) scale(0.7167,0.9800)" d="M0.6,1.6 L2,0 V10"/><path vector-effect="non-scaling-stroke" transform="translate(4.60,0) scale(0.7167,0.9800)" d="M3,0 C1,0 0,2 0,5 C0,8 1,10 3,10 C5,10 6,8 6,5 C6,2 5,0 3,0 Z"/><path vector-effect="non-scaling-stroke" transform="translate(12.00,0) scale(0.7167,0.9800)" d="M3,0 C1,0 0,2 0,5 C0,8 1,10 3,10 C5,10 6,8 6,5 C6,2 5,0 3,0 Z"/><path vector-effect="non-scaling-stroke" transform="translate(19.40,0) scale(0.7167,0.9800)" d="M3,0 C1,0 0,2 0,5 C0,8 1,10 3,10 C5,10 6,8 6,5 C6,2 5,0 3,0 Z"/></g></g>
<g transform="translate(817.00,143.00) rotate(-90)" fill="none" stroke="#dadada" stroke-width="1.1" stroke-linecap="round" stroke-linejoin="round"><g style="vector-effect:non-scaling-stroke"><path vector-effect="non-scaling-stroke" transform="translate(0.00,0) scale(0.9000,0.8200)" d="M6,2 C5.5,0.7 4.3,0 3,0 C1.2,0 0,2 0,5 C0,8 1.2,10 3,10 C4.8,10 6,8.8 6,6.5 V5.5 H3.5"/><path vector-effect="non-scaling-stroke" transform="translate(7.00,0) scale(0.9000,0.8200)" d="M0,10 V0 L3,6.5 L6,0 V10"/><path vector-effect="non-scaling-stroke" transform="translate(14.00,0) scale(0.9000,0.8200)" d="M0.6,1.6 L2,0 V10"/><path vector-effect="non-scaling-stroke" transform="translate(18.00,0) scale(0.9000,0.8200)" d="M3,4.6 C1.4,4.6 0.4,3.6 0.4,2.3 C0.4,1 1.5,0 3,0 C4.5,0 5.6,1 5.6,2.3 C5.6,3.6 4.6,4.6 3,4.6 C1.2,4.6 0,5.7 0,7.3 C0,8.9 1.3,10 3,10 C4.7,10 6,8.9 6,7.3 C6,5.7 4.8,4.6 3,4.6 Z"/><path vector-effect="non-scaling-stroke" transform="translate(24.10,0) scale(0.9000,0.8200)" d="M0.3,2.5 C0.3,1 1.5,0 3,0 C4.5,0 5.7,1 5.7,2.5 C5.7,4.2 4.5,5.4 0,10 H6"/><path vector-effect="non-scaling-stroke" transform="translate(29.90,0) scale(0.9000,0.8200)" d="M0.5,1.2 C1,0.4 2,0 3,0 C4.5,0 5.5,1 5.5,2.5 C5.5,4 4.4,4.8 2.6,4.8 C4.6,4.8 6,5.8 6,7.3 C6,9 4.6,10 3,10 C1.8,10 0.8,9.5 0.2,8.7"/></g></g>
<g transform="translate(824.50,459.00) rotate(90)" fill="none" stroke="#dadada" stroke-width="1.1" stroke-linecap="round" stroke-linejoin="round"><g style="vector-effect:non-scaling-stroke"><path vector-effect="non-scaling-stroke" transform="translate(0.00,0) scale(0.9000,0.8200)" d="M6,2 C5.5,0.7 4.3,0 3,0 C1.2,0 0,2 0,5 C0,8 1.2,10 3,10 C4.8,10 6,8.8 6,6.5 V5.5 H3.5"/><path vector-effect="non-scaling-stroke" transform="translate(7.00,0) scale(0.9000,0.8200)" d="M0,10 V0 L3,6.5 L6,0 V10"/><path vector-effect="non-scaling-stroke" transform="translate(14.00,0) scale(0.9000,0.8200)" d="M0.6,1.6 L2,0 V10"/><path vector-effect="non-scaling-stroke" transform="translate(18.00,0) scale(0.9000,0.8200)" d="M3,4.6 C1.4,4.6 0.4,3.6 0.4,2.3 C0.4,1 1.5,0 3,0 C4.5,0 5.6,1 5.6,2.3 C5.6,3.6 4.6,4.6 3,4.6 C1.2,4.6 0,5.7 0,7.3 C0,8.9 1.3,10 3,10 C4.7,10 6,8.9 6,7.3 C6,5.7 4.8,4.6 3,4.6 Z"/><path vector-effect="non-scaling-stroke" transform="translate(24.10,0) scale(0.9000,0.8200)" d="M0.3,2.5 C0.3,1 1.5,0 3,0 C4.5,0 5.7,1 5.7,2.5 C5.7,4.2 4.5,5.4 0,10 H6"/><path vector-effect="non-scaling-stroke" transform="translate(29.90,0) scale(0.9000,0.8200)" d="M0.5,1.2 C1,0.4 2,0 3,0 C4.5,0 5.5,1 5.5,2.5 C5.5,4 4.4,4.8 2.6,4.8 C4.6,4.8 6,5.8 6,7.3 C6,9 4.6,10 3,10 C1.8,10 0.8,9.5 0.2,8.7"/></g></g>
<g transform="translate(284.80,598.30) rotate(-90)" fill="none" stroke="#dadada" stroke-width="1.1" stroke-linecap="round" stroke-linejoin="round"><g style="vector-effect:non-scaling-stroke"><path vector-effect="non-scaling-stroke" transform="translate(0.00,0) scale(0.9000,0.7600)" d="M6,2 C5.5,0.7 4.3,0 3,0 C1.2,0 0,2 0,5 C0,8 1.2,10 3,10 C4.8,10 6,8.8 6,6.5 V5.5 H3.5"/><path vector-effect="non-scaling-stroke" transform="translate(7.00,0) scale(0.9000,0.7600)" d="M0,10 V0 L3,6.5 L6,0 V10"/><path vector-effect="non-scaling-stroke" transform="translate(14.00,0) scale(0.9000,0.7600)" d="M0.6,1.6 L2,0 V10"/><path vector-effect="non-scaling-stroke" transform="translate(18.00,0) scale(0.9000,0.7600)" d="M3,4.6 C1.4,4.6 0.4,3.6 0.4,2.3 C0.4,1 1.5,0 3,0 C4.5,0 5.6,1 5.6,2.3 C5.6,3.6 4.6,4.6 3,4.6 C1.2,4.6 0,5.7 0,7.3 C0,8.9 1.3,10 3,10 C4.7,10 6,8.9 6,7.3 C6,5.7 4.8,4.6 3,4.6 Z"/><path vector-effect="non-scaling-stroke" transform="translate(24.10,0) scale(0.9000,0.7600)" d="M0.3,2.5 C0.3,1 1.5,0 3,0 C4.5,0 5.7,1 5.7,2.5 C5.7,4.2 4.5,5.4 0,10 H6"/><path vector-effect="non-scaling-stroke" transform="translate(29.90,0) scale(0.9000,0.7600)" d="M0.5,1.2 C1,0.4 2,0 3,0 C4.5,0 5.5,1 5.5,2.5 C5.5,4 4.4,4.8 2.6,4.8 C4.6,4.8 6,5.8 6,7.3 C6,9 4.6,10 3,10 C1.8,10 0.8,9.5 0.2,8.7"/></g></g>
<g transform="translate(97.80,-9.00) rotate(90)" fill="none" stroke="#dadada" stroke-width="1.1" stroke-linecap="round" stroke-linejoin="round"><g style="vector-effect:non-scaling-stroke"><path vector-effect="non-scaling-stroke" transform="translate(0.00,0) scale(0.9000,0.7800)" d="M6,2 C5.5,0.7 4.3,0 3,0 C1.2,0 0,2 0,5 C0,8 1.2,10 3,10 C4.8,10 6,8.8 6,6.5 V5.5 H3.5"/><path vector-effect="non-scaling-stroke" transform="translate(7.00,0) scale(0.9000,0.7800)" d="M0,10 V0 L3,6.5 L6,0 V10"/><path vector-effect="non-scaling-stroke" transform="translate(14.00,0) scale(0.9000,0.7800)" d="M0.6,1.6 L2,0 V10"/><path vector-effect="non-scaling-stroke" transform="translate(18.00,0) scale(0.9000,0.7800)" d="M0.3,2.5 C0.3,1 1.5,0 3,0 C4.5,0 5.7,1 5.7,2.5 C5.7,4.2 4.5,5.4 0,10 H6"/><path vector-effect="non-scaling-stroke" transform="translate(24.10,0) scale(0.9000,0.7800)" d="M0.3,2.5 C0.3,1 1.5,0 3,0 C4.5,0 5.7,1 5.7,2.5 C5.7,4.2 4.5,5.4 0,10 H6"/><path vector-effect="non-scaling-stroke" transform="translate(29.90,0) scale(0.9000,0.7800)" d="M0.5,1.2 C1,0.4 2,0 3,0 C4.5,0 5.5,1 5.5,2.5 C5.5,4 4.4,4.8 2.6,4.8 C4.6,4.8 6,5.8 6,7.3 C6,9 4.6,10 3,10 C1.8,10 0.8,9.5 0.2,8.7"/></g></g>
<g transform="translate(178.90,576.30)" fill="none" stroke="#dadada" stroke-width="1.2" stroke-linecap="round" stroke-linejoin="round"><g style="vector-effect:non-scaling-stroke"><path vector-effect="non-scaling-stroke" transform="translate(0.00,0) scale(1.1667,1.4300)" d="M0,0 H6 L2,10"/></g></g>
<path transform="translate(116.80,12.20) scale(0.7800,1.2400)" d="M0.4,0.8 H4.2 V2.9 H1 V5 H4.2 V9.6 L3.2,9.1 M1.4,6.4 L2.6,7.2 M0.8,8.8 L2.8,8 M5.6,0.8 H9.6 V2.9 H6.4 V5 H9.6 V9.6 L8.6,9.1 M6.8,6.4 L8,7.2 M6.2,8.8 L8.2,8" fill="none" stroke="#f0f0f0" stroke-width="1.3" vector-effect="non-scaling-stroke" stroke-linecap="square"/>
<path transform="translate(125.80,12.20) scale(0.7800,1.2400)" d="M1,2 H9 V7.2 H1 Z M1,4.6 H9 M5,0 V8.6 Q5,9.5 6,9.5 H9.7 V8" fill="none" stroke="#f0f0f0" stroke-width="1.3" vector-effect="non-scaling-stroke" stroke-linecap="square"/>
<path transform="translate(134.80,12.20) scale(0.7800,1.2400)" d="M1,0.3 L2,1.3 M1,2 V10 M3,1 H9 V9.6 L8,9.1 M3.6,3.5 H6.6 V8 H3.6 Z M3.6,5.7 H6.6" fill="none" stroke="#f0f0f0" stroke-width="1.3" vector-effect="non-scaling-stroke" stroke-linecap="square"/>
<path transform="translate(144.20,477.40) scale(1.1600,1.0800)" d="M1,1.2 H9 M2,5 H8 M0.3,9.2 H9.7" fill="none" stroke="#ffff00" stroke-width="2.0" vector-effect="non-scaling-stroke" stroke-linecap="square"/>
<path transform="translate(157.40,477.40) scale(1.1600,1.0800)" d="M0,1.2 H4 M2.1,1.2 V9.3 L1.2,8.7 M4.4,0.8 H10 M7.2,0.8 L6.6,2.4 M5,2.4 H9.6 V7.6 H5 Z M5,4.2 H9.6 M5,5.9 H9.6 M6.4,7.6 L4.6,9.9 M8.1,7.6 L10,9.9" fill="none" stroke="#ffff00" stroke-width="2.0" vector-effect="non-scaling-stroke" stroke-linecap="square"/>
<path transform="translate(170.60,477.40) scale(1.1600,1.0800)" d="M5,0 V4.3 M2,1 L3,3.5 M8,1 L7,3.5 M0.3,4.6 H9.7 M3.7,4.6 Q3.5,8.2 0.3,9.9 M6.3,4.6 V8.9 Q6.3,9.5 7,9.5 H9.6 V8" fill="none" stroke="#ffff00" stroke-width="2.0" vector-effect="non-scaling-stroke" stroke-linecap="square"/>
<path transform="translate(198.60,477.40) scale(1.1600,1.0800)" d="M1.5,2.2 H8.5 M0.3,8.8 H9.7" fill="none" stroke="#ffff00" stroke-width="2.0" vector-effect="non-scaling-stroke" stroke-linecap="square"/>
<path transform="translate(211.80,477.40) scale(1.1600,1.0800)" d="M0,1.2 H4 M2.1,1.2 V9.3 L1.2,8.7 M4.4,0.8 H10 M7.2,0.8 L6.6,2.4 M5,2.4 H9.6 V7.6 H5 Z M5,4.2 H9.6 M5,5.9 H9.6 M6.4,7.6 L4.6,9.9 M8.1,7.6 L10,9.9" fill="none" stroke="#ffff00" stroke-width="2.0" vector-effect="non-scaling-stroke" stroke-linecap="square"/>
<path transform="translate(225.00,477.40) scale(1.1600,1.0800)" d="M5,0 V4.3 M2,1 L3,3.5 M8,1 L7,3.5 M0.3,4.6 H9.7 M3.7,4.6 Q3.5,8.2 0.3,9.9 M6.3,4.6 V8.9 Q6.3,9.5 7,9.5 H9.6 V8" fill="none" stroke="#ffff00" stroke-width="2.0" vector-effect="non-scaling-stroke" stroke-linecap="square"/>
<path transform="translate(253.30,477.40) scale(1.1600,1.0800)" d="M0.3,5.2 H9.7" fill="none" stroke="#ffff00" stroke-width="2.0" vector-effect="non-scaling-stroke" stroke-linecap="square"/>
<path transform="translate(266.50,477.40) scale(1.1600,1.0800)" d="M0,1.2 H4 M2.1,1.2 V9.3 L1.2,8.7 M4.4,0.8 H10 M7.2,0.8 L6.6,2.4 M5,2.4 H9.6 V7.6 H5 Z M5,4.2 H9.6 M5,5.9 H9.6 M6.4,7.6 L4.6,9.9 M8.1,7.6 L10,9.9" fill="none" stroke="#ffff00" stroke-width="2.0" vector-effect="non-scaling-stroke" stroke-linecap="square"/>
<path transform="translate(279.70,477.40) scale(1.1600,1.0800)" d="M5,0 V4.3 M2,1 L3,3.5 M8,1 L7,3.5 M0.3,4.6 H9.7 M3.7,4.6 Q3.5,8.2 0.3,9.9 M6.3,4.6 V8.9 Q6.3,9.5 7,9.5 H9.6 V8" fill="none" stroke="#ffff00" stroke-width="2.0" vector-effect="non-scaling-stroke" stroke-linecap="square"/>
<path transform="translate(469.80,480.50) scale(1.1600,1.1600)" d="M0.3,0.8 H9.7 M5,0.8 L4.5,2.5 M1,2.5 H9 V9.8 H1 Z M3.6,2.5 V9.8 M6.4,2.5 V9.8 M3.6,5 H6.4 M3.6,7.4 H6.4" fill="none" stroke="#ffff00" stroke-width="2.0" vector-effect="non-scaling-stroke" stroke-linecap="square"/>
<path transform="translate(483.20,480.50) scale(1.1600,1.1600)" d="M5,0 V4.3 M2,1 L3,3.5 M8,1 L7,3.5 M0.3,4.6 H9.7 M3.7,4.6 Q3.5,8.2 0.3,9.9 M6.3,4.6 V8.9 Q6.3,9.5 7,9.5 H9.6 V8" fill="none" stroke="#ffff00" stroke-width="2.0" vector-effect="non-scaling-stroke" stroke-linecap="square"/>
<path transform="translate(277.40,314.00) scale(0.8200,1.3000)" d="M0,3.2 H3.2 M1.6,0.3 V9.5 L0.8,9 M0,7.2 L3.2,5.6 M4.2,1 V10 M4.2,1 H8.8 V3.6 L7.8,3.1 M4.6,5 H8.8 L5.2,10 M5.6,6.2 L9.8,10" fill="none" stroke="#eeeeee" stroke-width="1.2" vector-effect="non-scaling-stroke" stroke-linecap="square"/>
<path transform="translate(286.80,314.00) scale(0.8200,1.3000)" d="M2.6,0.3 L1,3 M1.6,2 H8.6 M5,0 V4.8 M0.3,4.8 H9.7 M2,6.6 H8 V9.9 H2 Z" fill="none" stroke="#eeeeee" stroke-width="1.2" vector-effect="non-scaling-stroke" stroke-linecap="square"/>
<path transform="translate(296.20,314.00) scale(0.8200,1.3000)" d="M1,1 H9.7 M1,1 V6 Q1,8.6 0,10 M3.6,4 H9.7 M6.6,4 V9.9 L5.6,9.4" fill="none" stroke="#eeeeee" stroke-width="1.2" vector-effect="non-scaling-stroke" stroke-linecap="square"/>
<path transform="translate(350.00,315.00) scale(0.6000,1.0000)" d="M5,0.3 V3 Q4.2,7.6 0.3,9.8 M5,3.6 Q6.6,7.6 9.8,9.8" fill="none" stroke="#eeeeee" stroke-width="1.1" vector-effect="non-scaling-stroke" stroke-linecap="square"/>
<path transform="translate(159.20,576.60) scale(0.7800,1.3600)" d="M5,0 V2.6 M1,1.3 H9 M2.2,2.6 H7.8 M1.6,4.1 H8.8 V6.6 H1.6 M1.6,4.1 V6.8 Q1.4,9 0.2,10" fill="none" stroke="#eeeeee" stroke-width="1.3" vector-effect="non-scaling-stroke" stroke-linecap="square"/>
<path transform="translate(168.60,576.60) scale(0.7800,1.3600)" d="M1,0.3 L2,1.3 M1,2 V10 M3,1 H9 V9.6 L8,9.1 M3.5,3 H6.6 V6.6 H3.5 Z M3.5,4.8 H6.6 M5,3 V9.6" fill="none" stroke="#eeeeee" stroke-width="1.3" vector-effect="non-scaling-stroke" stroke-linecap="square"/>
</svg></body></html>
